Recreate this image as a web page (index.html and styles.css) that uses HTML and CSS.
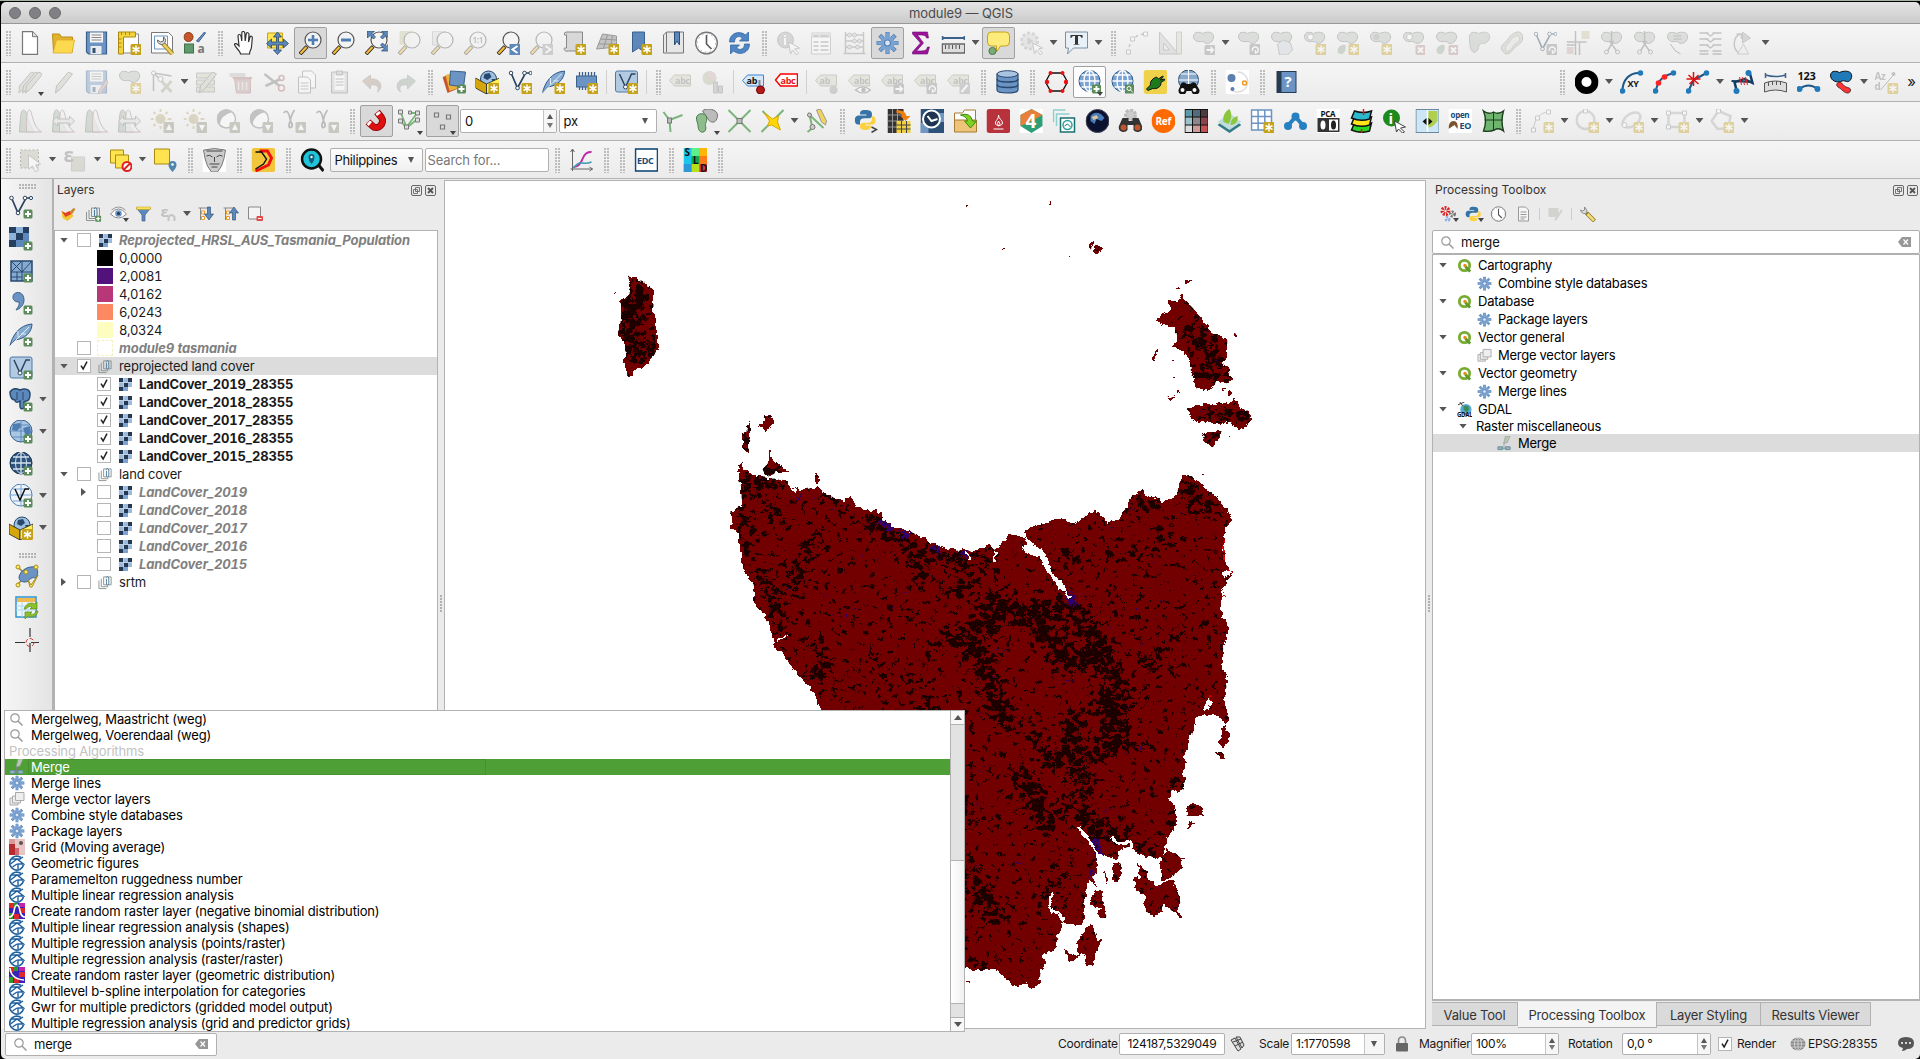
FILE: index.html
```html
<!DOCTYPE html>
<html lang="en">
<head>
<meta charset="utf-8">
<title>module9 — QGIS</title>
<link rel="stylesheet" href="styles.css">
</head>
<body>
<svg class="sprite" aria-hidden="true">
<defs>
<!-- badges -->
<symbol id="bstar" viewBox="0 0 24 24"><rect x="13" y="13" width="11" height="11" rx="1.500" fill="#c4a21a"/><path d="M18.500 14.500v8M15 16.500l7 4M15 20.500l7-4" stroke="#fff" stroke-width="1.500"/></symbol>
<symbol id="bplus" viewBox="0 0 24 24"><rect x="14.500" y="14.500" width="9" height="9" rx="1.500" fill="#5a8c5a"/><path d="M19 16v6M16 19h6" stroke="#fff" stroke-width="2"/></symbol>
<symbol id="bx" viewBox="0 0 24 24"><rect x="14" y="14" width="10" height="10" rx="1.500" fill="#b78f8f"/><path d="M16.500 16.500l5 5M21.500 16.500l-5 5" stroke="#fff" stroke-width="2"/></symbol>
<symbol id="barr" viewBox="0 0 24 24"><rect x="13" y="14" width="11" height="10" rx="1.500" fill="#888"/><path d="M15 18h4v-3l4 4-4 4v-3h-4z" fill="#fff"/></symbol>
<symbol id="brot" viewBox="0 0 24 24"><rect x="13" y="13" width="11" height="11" rx="1.500" fill="#888"/><path d="M16 20a3 3 0 1 1 3 2v-3" stroke="#fff" stroke-width="1.500" fill="none"/></symbol>
<symbol id="bup" viewBox="0 0 24 24"><rect x="13" y="13" width="11" height="11" rx="1.500" fill="#8b8b78"/><path d="M18.500 15l3 6h-6z" fill="#fff"/></symbol>
<symbol id="bdn" viewBox="0 0 24 24"><rect x="13" y="13" width="11" height="11" rx="1.500" fill="#8b8b78"/><path d="M18.500 22l3-6h-6z" fill="#fff"/></symbol>
<symbol id="blob" viewBox="0 0 24 24"><path d="M2 5c1-5 6-4 9-2.500 4-2 10-2 11 2s-3 8-6 8-3-2.500-6-2-8 0-8-5.500z" fill="#b9c0b9" stroke="#777" stroke-width="1"/></symbol>
<symbol id="loupe" viewBox="0 0 24 24"><path d="M8.500 15.500L1.500 23" stroke="#222" stroke-width="4"/><path d="M8 16L2 22.500" stroke="#f0b93a" stroke-width="2.400"/><circle cx="14.500" cy="9" r="8" fill="#f4f4f4" fill-opacity=".9" stroke="#555" stroke-width="1.200"/></symbol>
<symbol id="vline" viewBox="0 0 24 24"><path d="M3 4l6 14L17 3h5" fill="none" stroke="#2b4560" stroke-width="1.700"/><g fill="#fff" stroke="#2b4560"><circle cx="2.500" cy="3" r="1.800"/><circle cx="9" cy="18" r="1.800"/><circle cx="16" cy="3" r="1.800"/><circle cx="22" cy="3" r="1.600"/></g></symbol>
<symbol id="globe" viewBox="0 0 24 24"><circle cx="12" cy="11" r="10.500" fill="#7ba3d2" stroke="#2f5a88"/><path d="M12 1v20M2 11h20M4 5h16M4 17h16" stroke="#fff" stroke-width="1.300"/><ellipse cx="12" cy="11" rx="5.500" ry="10.500" fill="none" stroke="#fff" stroke-width="1.300"/></symbol>
<symbol id="pencil" viewBox="0 0 24 24"><path d="M17 2l4 2L9 19l-5 4 1-7z" fill="#c9c8bc" stroke="#777"/></symbol>
<symbol id="tag" viewBox="0 0 24 24"><path d="M6 5h16v11H6L1 10.500z" fill="#d2d2c0" stroke="#8f8f80"/></symbol>
<symbol id="abc" viewBox="0 0 24 24"><use href="#tag"/><text x="6.500" y="14" class="t9">abc</text></symbol>
<!-- project -->
<symbol id="new" viewBox="0 0 24 24"><path d="M4 .7h10l5 5v17.600H4z" fill="#fff" stroke="#777" stroke-width="1.200"/><path d="M14 .7v5h5" fill="#ddd" stroke="#777"/></symbol>
<symbol id="open" viewBox="0 0 24 24"><path d="M1 3h7l2 3h11v15H2z" fill="#e2b32e" stroke="#bb8d15"/><path d="M5 9h18l-2.500 13H1.500z" fill="#fcd94f" stroke="#dca92b" stroke-width=".8"/></symbol>
<symbol id="save" viewBox="0 0 24 24"><path d="M2 1h20v22H4l-2-2z" fill="#6b93c4" stroke="#3a618c" stroke-width="1.200"/><path d="M5.500 1.500h13v10h-13z" fill="#f6f6f6"/><path d="M7 4h10M7 6.500h10M7 9h10" stroke="#888"/><path d="M6 15h11v8H6z" fill="#e8ecef"/><path d="M8 17h3v5H8z" fill="#34516f"/></symbol>
<symbol id="layout" viewBox="0 0 24 24"><path d="M4 3h17v19H4z" fill="#fff" stroke="#888"/><path d="M1 1h17v5H6v17H1z" fill="#f5d33d" stroke="#a88912"/><path d="M4 1v3M8 1v3M12 1v3M1 8h3M1 12h3M1 16h3" stroke="#a88912"/><use href="#bstar"/></symbol>
<symbol id="laymgr" viewBox="0 0 24 24"><path d="M1 1.500h17l4 4V22H1z" fill="#fff" stroke="#777"/><path d="M4 5h13v13H4z" fill="none" stroke="#6b93c4"/><path d="M12 12l10 11" stroke="#a08a30" stroke-width="4.500"/><path d="M12 12l10 11" stroke="#f0d060" stroke-width="2.500"/><path d="M7 9a4 4 0 0 0 6 4 4 4 0 0 0 0-7v4l-3 1z" fill="#ddd" stroke="#666"/></symbol>
<symbol id="style" viewBox="0 0 24 24"><circle cx="5" cy="6" r="4.500" fill="#c6562c" stroke="#8b3818"/><path d="M13 10l8-9 1 1-7 9z" fill="#6b93c4" stroke="#3a618c"/><rect x="1" y="13" width="9" height="9" fill="#5e9a6c" stroke="#3c714a"/><text x="14" y="22" class="t12">a</text></symbol>
<symbol id="hand" viewBox="0 0 24 24"><path d="M8 23c0-3-6-7-6-10 1.500-1.500 3.500 1 4.500 2L5.500 5c0-2 2.500-2 3 0l.8 5V2c0-2 2.700-2 3 0l.4 8 1-7c.4-2 2.800-1.500 2.800.5L16 11l1.500-5c.8-1.500 2.500-.7 2.300 1L19 16c-.3 3-2 4-2 7z" fill="#fff" stroke="#333" stroke-width="1.200"/></symbol>
<symbol id="pan" viewBox="0 0 24 24"><path d="M2 2h15v15H2z" fill="#ffe44f" stroke="#c4a21a"/><path d="M12 1l4 5h-3v5h5V8l5 4.500-5 4.500v-3h-5v5h3l-4 4.500L8 19h3v-5H6v3l-5-4.500L6 8v3h5V6H8z" fill="#5c88bb" stroke="#28486d" stroke-width=".8"/></symbol>
<symbol id="zin" viewBox="0 0 24 24"><use href="#loupe"/><path d="M14.500 4v10M9.500 9h10" stroke="#4e7db1" stroke-width="2.600"/></symbol>
<symbol id="zout" viewBox="0 0 24 24"><use href="#loupe"/><path d="M9.500 9h10" stroke="#4e7db1" stroke-width="3"/></symbol>
<symbol id="zfull" viewBox="0 0 24 24"><use href="#loupe"/><path d="M3 0h7L7.500 2.500 11 6 9 8 5.500 4.500 3 7zM24 0h-7l2.500 2.500L16 6l2 2 3.500-3.500L24 7zM24 20h-7l2.500-2.500L16 14l2-2 3.500 3.500L24 13z" fill="#5c88bb" stroke="#28486d" stroke-width=".7"/></symbol>
<symbol id="zsel" viewBox="0 0 24 24"><path d="M2 0h12v14H2z" fill="#c8c8a0"/><use href="#loupe"/></symbol>
<symbol id="zlay" viewBox="0 0 24 24"><path d="M2 0h12v14H2z" fill="#ddd" stroke="#aaa"/><use href="#loupe"/></symbol>
<symbol id="znat" viewBox="0 0 24 24"><use href="#loupe"/><text x="9" y="12" class="t8">1:1</text></symbol>
<symbol id="zlast" viewBox="0 0 24 24"><use href="#loupe"/><rect x="13" y="13" width="11" height="11" fill="#5c88bb"/><path d="M21 15l-5 3.500 5 3.500" stroke="#fff" stroke-width="2" fill="none"/></symbol>
<symbol id="znext" viewBox="0 0 24 24"><use href="#loupe"/><rect x="13" y="13" width="11" height="11" fill="#999"/><path d="M16 15l5 3.500-5 3.500" stroke="#fff" stroke-width="2" fill="none"/></symbol>
<symbol id="nmap" viewBox="0 0 24 24"><path d="M4 1h16v19H6c-4 1-5-2-4-3h2z" fill="#d8d8d8" stroke="#888"/><path d="M4 1q-3 0-2 3h2" fill="#eee" stroke="#888"/><use href="#bstar"/></symbol>
<symbol id="n3d" viewBox="0 0 24 24"><path d="M7 3l14 2v11L1 18z" fill="#c4c4c4" stroke="#999"/><path d="M5 8l16 1M3 13l18 0M12 4L8 17M17 4l-2 13" stroke="#999"/><use href="#bstar"/></symbol>
<symbol id="nbook" viewBox="0 0 24 24"><path d="M4 1h12v20l-6-4-6 4z" fill="#5c88bb" stroke="#3a618c"/><use href="#bstar"/></symbol>
<symbol id="book" viewBox="0 0 24 24"><path d="M5 1h17v21H2V4z" fill="#e6e6e6" stroke="#777"/><path d="M5 1v20" stroke="#777"/><path d="M13 1h5v13l-2.500-4-2.500 4z" fill="#5c88bb" stroke="#2c4f78"/></symbol>
<symbol id="clock" viewBox="0 0 24 24"><circle cx="12" cy="12" r="10.800" fill="#fff" stroke="#777" stroke-width="1.400"/><circle cx="12" cy="12" r="9" fill="none" stroke="#9db6d0" stroke-dasharray="1.500 3.200"/><path d="M12 4v9l5 5" fill="none" stroke="#555" stroke-width="1.600"/></symbol>
<symbol id="refresh" viewBox="0 0 24 24"><path d="M2 11C2 2 12-1 18 4l3-3v9h-9l3-3c-4-3-8-1-8 4zM22 13c0 9-10 12-16 7l-3 3v-9h9l-3 3c4 3 8 1 8-4z" fill="#4f85c3" stroke="#3468a3" stroke-width=".8"/></symbol>
<!-- attributes -->
<symbol id="ident" viewBox="0 0 24 24"><circle cx="9" cy="9" r="8" fill="#aaa" stroke="#888"/><text x="6.500" y="14" class="t13 w">i</text><path d="M12 11l11 6-5 1 4 4-2 2-4-5-2 4z" fill="#fff" stroke="#888"/></symbol>
<symbol id="table" viewBox="0 0 24 24"><path d="M2 2h19v21H2z" fill="#fff" stroke="#999"/><path d="M2 2h19v5H2z" fill="#ccc"/><path d="M4 11h5M11 11h8M4 15h5M11 15h8M4 19h5M11 19h8M4 5h5M11 5h8" stroke="#888" stroke-width="1.500"/></symbol>
<symbol id="abacus" viewBox="0 0 24 24"><path d="M3 1v22M21 1v22M1 22.500h22M3 4h18M3 10h18M3 16h18" stroke="#888" stroke-width="1.500"/><g fill="#ccc" stroke="#888"><circle cx="7" cy="4" r="2"/><circle cx="12" cy="4" r="2"/><circle cx="12" cy="10" r="2"/><circle cx="17" cy="10" r="2"/><circle cx="7" cy="16" r="2"/><circle cx="15" cy="16" r="2"/></g></symbol>
<symbol id="gear" viewBox="0 0 24 24"><path d="M12 1v22M1 12h22M4.200 4.200l15.600 15.600M19.800 4.200L4.200 19.800" stroke="#5580b4" stroke-width="4.200"/><path d="M12 1.600v20.800M1.600 12h20.800M4.700 4.700l14.600 14.600M19.300 4.700L4.700 19.300" stroke="#7ba3d2" stroke-width="2.800"/><circle cx="12" cy="12" r="7" fill="#7ba3d2"/><circle cx="12" cy="12" r="3" fill="#dce6f2" stroke="#5580b4" stroke-width="1.200"/></symbol>
<symbol id="sum" viewBox="0 0 24 24"><path d="M4 1h15l1 6h-2c-1-3-2-3-9-3l6 8-7 8c8 0 10 0 11-4h2l-2 7H4v-2l8-9-8-9z" fill="#9c149c" stroke="#6b0b6b" stroke-width=".6"/></symbol>
<symbol id="meas" viewBox="0 0 24 24"><path d="M1 7h22M1 5v4M23 5v4" stroke="#3a618c" stroke-width="1.800"/><rect x=".7" y="13" width="22.600" height="9" fill="#ddd" stroke="#555" stroke-width="1.300"/><path d="M4 14v4M7.500 14v4M11 14v4M14.500 14v4M18 14v4" stroke="#555"/></symbol>
<symbol id="tip" viewBox="0 0 24 24"><path d="M5 1h14q4 0 4 4v6q0 4-4 4h-5l-4 6v-6H5q-4 0-4-4V5q0-4 4-4z" fill="#fdec7b" stroke="#c4a21a"/><circle cx="6" cy="20" r="3.600" fill="#7aa97a" stroke="#4d7a4d"/></symbol>
<symbol id="act" viewBox="0 0 24 24"><g opacity=".8"><circle cx="10" cy="10" r="8" fill="#ccc" stroke="#999" stroke-width="3" stroke-dasharray="3 2"/><path d="M8 6l6 4-6 4z" fill="#888"/></g><path d="M13 12l10 5-4 1 4 4-2 2-4-5-2 4z" fill="#fff" stroke="#888"/></symbol>
<symbol id="tann" viewBox="0 0 24 24"><path d="M1 1h22v16H9l-6 6 1-6H1z" fill="#e9f1f8" stroke="#7a8ea5"/><path d="M6 4h12v3h-1c0-1.500-1-2-3.500-2v8l2 .8H8.500l2-.8V5C8 5 7 5.500 7 7H6z" fill="#333"/></symbol>
<!-- digitizing -->
<symbol id="cad" viewBox="0 0 24 24"><path d="M3 22C3 12 8 3 20 3" fill="none" stroke="#888" stroke-dasharray="3 3" stroke-width="1.500"/><path d="M1 19h4v4H1zM5 6h4v4H5zM18 1h4v4h-4z" fill="#fff" stroke="#888"/></symbol>
<symbol id="tri" viewBox="0 0 24 24"><path d="M1 1l19 22H1zM5 12l6 7H5z" fill="#ccc" fill-rule="evenodd" stroke="#888"/><path d="M18 1h5v22h-5z" fill="#d8d8c8" stroke="#999"/></symbol>
<symbol id="bmove" viewBox="0 0 24 24"><use href="#blob"/><use href="#barr"/></symbol>
<symbol id="brotate" viewBox="0 0 24 24"><use href="#blob"/><use href="#brot"/></symbol>
<symbol id="bsimp" viewBox="0 0 24 24"><use href="#blob"/><path d="M8 13l6-4 7 3 2 7-5 5H10z" fill="#cfd5de" stroke="#888"/></symbol>
<symbol id="bring" viewBox="0 0 24 24"><use href="#blob"/><circle cx="8" cy="6" r="3" fill="#fff" stroke="#888"/><use href="#bstar"/></symbol>
<symbol id="bpart" viewBox="0 0 24 24"><use href="#blob"/><path d="M2 20c0-4 4-7 8-6 1 4-1 9-4 9s-4-1-4-3z" fill="#9aa89a"/><use href="#bstar"/></symbol>
<symbol id="bfill" viewBox="0 0 24 24"><use href="#blob"/><circle cx="8" cy="6" r="3" fill="#999"/><use href="#bstar"/></symbol>
<symbol id="bdring" viewBox="0 0 24 24"><use href="#blob"/><circle cx="8" cy="6" r="3" fill="#fff" stroke="#888"/><use href="#bx"/></symbol>
<symbol id="bdpart" viewBox="0 0 24 24"><use href="#blob"/><path d="M2 20c0-4 4-7 8-6 1 4-1 9-4 9s-4-1-4-3z" fill="#9aa89a"/><use href="#bx"/></symbol>
<symbol id="breshape" viewBox="0 0 24 24"><path d="M2 5c1-5 6-4 9-2.500 4-2 10-2 11 2s-3 8-6 8-4 0-5 4-4 6-6 4-3-6-3-14z" fill="#b9beb9" stroke="#888"/></symbol>
<symbol id="boffset" viewBox="0 0 24 24"><path d="M14 2c5-3 9 1 8 6s-4 5-7 8-7 9-11 6-4-7 0-10 5-8 10-10z" fill="#c4c8b8" stroke="#888"/><path d="M15 5c3-1 5 1 4 4s-4 3-6 6-5 7-7 5-1-5 1-7 4-7 8-8z" fill="#e0e0dc" stroke="#999"/></symbol>
<symbol id="vrot" viewBox="0 0 24 24"><use href="#vline"/><use href="#brot"/></symbol>
<symbol id="vtrim" viewBox="0 0 24 24"><path d="M9 0v24M13 12v12M0 11h20M0 14h8" stroke="#777" stroke-width="1.500"/><rect x="15" y="0" width="8" height="8" fill="#c8c0a0"/><rect x="0" y="16" width="7" height="7" fill="#c8a8a8"/></symbol>
<symbol id="bcut" viewBox="0 0 24 24"><use href="#blob"/><path d="M12 0v12M10 10l7 10M14 10L8 20" stroke="#777" stroke-width="1.500"/><circle cx="7" cy="21" r="2" fill="none" stroke="#777"/><circle cx="18" cy="21" r="2" fill="none" stroke="#777"/></symbol>
<symbol id="bmerge" viewBox="0 0 24 24"><use href="#blob"/><path d="M8 5h8M8 8h8M5 13q4 8 10 10" stroke="#666" fill="none"/></symbol>
<symbol id="hatch" viewBox="0 0 24 24"><path d="M1 2h9M14 2h9M1 8h9M14 8h9M1 14h9M14 14h9M1 20h9M14 20h9M8 2l4 3 4-3M8 8l4 3 4-3M8 14l4 3 4-3M1 23h9M14 23h9" fill="none" stroke="#777" stroke-width="1.300"/></symbol>
<symbol id="rotsym" viewBox="0 0 24 24"><path d="M7 22C1 17 1 6 9 3M5 3h5v5" stroke="#888" fill="none" stroke-width="1.500"/><path d="M11 1l8 6-8 5z" fill="#aaa" stroke="#888"/><path d="M6 23h11l-5-10z" fill="#eee" stroke="#999"/></symbol>
<symbol id="pencils" viewBox="0 0 24 24"><use href="#pencil" x="-4"/><use href="#pencil"/><use href="#pencil" x="3"/></symbol>
<symbol id="savee" viewBox="0 0 24 24"><use href="#save"/><path d="M22 10l2 2-8 11-2 1v-3z" fill="#caa" stroke="#977"/></symbol>
<symbol id="addpoly" viewBox="0 0 24 24"><use href="#blob"/><use href="#bstar"/></symbol>
<symbol id="vtool" viewBox="0 0 24 24"><path d="M3 3v18M3 3l18 3M3 3l9 9" stroke="#777" stroke-width="1.500"/><path d="M11 22L21 11M11 11l10 11" stroke="#aaa890" stroke-width="3"/><circle cx="3" cy="3" r="2" fill="#fff" stroke="#777"/><circle cx="10" cy="9" r="2.500" fill="#fff" stroke="#777"/></symbol>
<symbol id="modattr" viewBox="0 0 24 24"><path d="M1 3h18v5H1zM1 10h18v5H1zM1 17h18v5H1z" fill="#ceceb6" stroke="#888"/><use href="#pencil"/></symbol>
<symbol id="trash" viewBox="0 0 24 24"><path d="M1 3h16v4H1z" fill="#bbb"/><path d="M6 9h16v14H8z" fill="#b99" stroke="#a77"/><path d="M4 8h20" stroke="#a77" stroke-width="2"/><path d="M10 12v8M14 12v8M18 12v8" stroke="#e6dcdc" stroke-width="1.500"/></symbol>
<symbol id="cut" viewBox="0 0 24 24"><path d="M3 4l15 12M4 16l15-7" stroke="#777" stroke-width="2.500"/><circle cx="20" cy="18" r="3" fill="none" stroke="#a66" stroke-width="1.500"/><circle cx="20" cy="8" r="2.500" fill="none" stroke="#a66" stroke-width="1.500"/></symbol>
<symbol id="copy" viewBox="0 0 24 24"><path d="M8 1h9l4 4v13H8z" fill="#fff" stroke="#777"/><path d="M4 7h9l3 3v13H4z" fill="#fff" stroke="#777"/><path d="M6 13h8M6 16h8M6 19h8" stroke="#888"/></symbol>
<symbol id="paste" viewBox="0 0 24 24"><path d="M4 2h16v21H4z" fill="#ccc" stroke="#777"/><path d="M7 5h10v15H7z" fill="#fff"/><path d="M9 1h6v4H9zM8 9h8M8 12h8M8 15h8" fill="#bbb" stroke="#777"/></symbol>
<symbol id="undo" viewBox="0 0 24 24"><path d="M2 11l8-6v4c11-1 13 9 7 13 2-5 0-8-7-7v4z" fill="#a8968a" stroke="#998a80"/></symbol>
<symbol id="redo" viewBox="0 0 24 24"><path d="M22 11l-8-6v4C3 8 1 18 7 22c-2-5 0-8 7-7v4z" fill="#98a599" stroke="#8a958b"/></symbol>
<!-- data sources -->
<symbol id="dsm" viewBox="0 0 24 24"><path d="M0 7l12-4 5 15-12 5z" fill="#c6562c"/><path d="M3 5l12-3 4 15-12 4z" fill="#e9b23c"/><path d="M8 1l15 1-2 15-14-2z" fill="#6b93c4" stroke="#3a618c"/><use href="#bplus"/></symbol>
<symbol id="gpkg" viewBox="0 0 24 24"><circle cx="13" cy="9" r="8" fill="#9cc0e0" stroke="#28486d"/><path d="M9 4l5-1 2 4-4 3-4-2zM16 9l4 0-2 5z" fill="#28486d"/><path d="M0 8l11 6v10L0 18z" fill="#d4a60a" stroke="#222" stroke-width=".8"/><path d="M24 8l-13 6v10l13-6z" fill="#ffee58" stroke="#222" stroke-width=".8"/></symbol>
<symbol id="gpkgn" viewBox="0 0 24 24"><use href="#gpkg"/><use href="#bstar"/></symbol>
<symbol id="nvec" viewBox="0 0 24 24"><use href="#vline"/><use href="#bstar"/></symbol>
<symbol id="avec" viewBox="0 0 24 24"><use href="#vline"/><use href="#bplus"/></symbol>
<symbol id="quill" viewBox="0 0 24 24"><path d="M1 23C3 13 10 2 23 1c0 8-7 15-17 16z" fill="#86abd2" stroke="#2f5a88"/><path d="M1 23L20 4M9 14v-6M12 11h5" stroke="#f0f5fa" stroke-width=".9"/></symbol>
<symbol id="nquill" viewBox="0 0 24 24"><use href="#quill"/><use href="#bstar"/></symbol>
<symbol id="aquill" viewBox="0 0 24 24"><use href="#quill"/><use href="#bplus"/></symbol>
<symbol id="chip" viewBox="0 0 24 24"><path d="M5 2v18M8 2v18M11 2v18M14 2v18M17 2v18M20 2v18" stroke="#3a618c" stroke-width="1.300"/><rect x="2" y="6" width="20" height="11" fill="#6b93c4" stroke="#3a618c"/><use href="#bstar"/></symbol>
<symbol id="vbox" viewBox="0 0 24 24"><rect x="1" y="1" width="22" height="21" rx="2" fill="#b3cbe2" stroke="#4e78a5"/><path d="M5 4l6 13 6-13h4" fill="none" stroke="#2b4560" stroke-width="1.500"/><circle cx="11" cy="17" r="2" fill="#fff" stroke="#2b4560"/></symbol>
<symbol id="nvbox" viewBox="0 0 24 24"><use href="#vbox"/><use href="#bstar"/></symbol>
<symbol id="avbox" viewBox="0 0 24 24"><use href="#vbox"/><use href="#bplus"/></symbol>
<symbol id="rast" viewBox="0 0 24 24"><path d="M0 0h20v20H0z" fill="#5c88bb"/><path d="M0 0h7v6H0zM14 0h6v6h-6zM7 6h7v7H7zM0 13h7v7H0z" fill="#243f60"/><path d="M7 0h7v6H7zM0 6h7v7H0z" fill="#8fb2d8"/><use href="#bplus"/></symbol>
<symbol id="mesh" viewBox="0 0 24 24"><path d="M2 2h21v20H2z" fill="#86abd2" stroke="#28486d" stroke-width="1.500"/><path d="M2 13h21M13 2v20M2 2l11 11M13 2L2 13M13 13L23 2M2 18h11M8 13v9" stroke="#28486d"/><use href="#bplus"/></symbol>
<symbol id="comma" viewBox="0 0 24 24"><path d="M4 6c0-6 11-7 11 3 0 5-4 9-8 10 2-3 4-5 3-8-3 0-6-1-6-5z" fill="#6b93c4" stroke="#3a618c"/><use href="#bplus"/></symbol>
<symbol id="pg" viewBox="0 0 24 24"><path d="M1 4c3-5 8-3 10-2 5-2 10-1 10 4s-2 7-4 7l-2 1v6q-4 2-4-2v-5c-4 3-5 0-5-1-4 0-5-5-5-8z" fill="#5c88bb" stroke="#28486d" stroke-width="1.500"/><path d="M8 4v8M14 4v8" stroke="#28486d"/><use href="#bplus"/></symbol>
<symbol id="wms" viewBox="0 0 24 24"><circle cx="12" cy="11" r="11" fill="#a9c6e3" stroke="#3a618c"/><path d="M4 4l7-1 1 4-4 4-5-1zM14 8l7-2 1 7-5 4z" fill="#4e7db1"/><path d="M1 11h22M4 5h16M4 17h16M12 0v22" stroke="#4e7db1" stroke-width=".8"/><use href="#bplus"/></symbol>
<symbol id="wcs" viewBox="0 0 24 24"><circle cx="12" cy="11" r="11" fill="#2d527b" stroke="#1d3653"/><path d="M2 11h20M4 5h16M4 17h16M12 0v22" stroke="#d5e2ef" stroke-width="1.300"/><ellipse cx="12" cy="11" rx="5.500" ry="10.500" fill="none" stroke="#d5e2ef"/><use href="#bplus"/></symbol>
<symbol id="wfs" viewBox="0 0 24 24"><circle cx="12" cy="11" r="11" fill="#eef4fa" stroke="#4e7db1"/><path d="M1 11h22M4 5h16M4 17h16M12 0v22" stroke="#7ba3d2"/><path d="M6 5l5 11 5-11h4" stroke="#111" fill="none" stroke-width="1.500"/><use href="#bplus"/></symbol>
<symbol id="topo" viewBox="0 0 24 24"><path d="M3 3l5 5 12-5M3 20l6-6" stroke="#a88b20" stroke-width="1.500" fill="none"/><path d="M4 13c2-8 10-11 16-10 4 2 3 10 0 11-5-2-5 4-10 4-4 0-6-2-6-5z" fill="#6b93c4" stroke="#3a618c"/><path d="M13 16l3 5 7-10-6 12-2 0z" fill="#ffee58" stroke="#a88b20"/><g fill="#ffee58" stroke="#a88b20"><circle cx="3" cy="3" r="2"/><circle cx="3" cy="21" r="2"/><circle cx="11" cy="8" r="2"/><circle cx="21" cy="3" r="2"/></g></symbol>
<symbol id="tblref" viewBox="0 0 24 24"><path d="M1 1h20v20H1z" fill="#eef7fd" stroke="#2f93cd" stroke-width="1.500"/><path d="M2 2h18v4H2z" fill="#f2b950"/><path d="M1 10h20M1 14h20M7 6v15M13 6v15" stroke="#b0d8ef"/><path d="M9 13c2-6 8-7 11-5l2-2v7h-7l2-2c-3-1-5 0-6 2zM23 15c-1 6-7 7-10 5l-3 3v-7h7l-2 2c3 1 5 0 6-3z" fill="#8cc02c" stroke="#5d8a12" stroke-width=".7"/></symbol>
<symbol id="cross" viewBox="0 0 24 24"><path d="M15 0v9M15 15v9M0 14.500h10M16 14.500h8" stroke="#333" stroke-width="1.200"/><circle cx="15" cy="14.500" r="4" fill="none" stroke="#c33" stroke-dasharray="4 2"/></symbol>
<!-- labels -->
<symbol id="diag" viewBox="0 0 24 24"><circle cx="8" cy="8" r="7" fill="#b5b59f"/><path d="M8 8V1a7 7 0 0 1 6 10z" fill="#caa"/><path d="M12 12h4v11h-4zM17 16h4v7h-4z" fill="#aaa" stroke="#888"/></symbol>
<symbol id="lpin" viewBox="0 0 24 24"><path d="M6 5h16v11H6L1 10.500z" fill="#d6e8fa" stroke="#3b84d4"/><text x="5" y="14" class="t9 k">ab</text><path d="M18 10v9" stroke="#888" stroke-width="2"/><circle cx="19" cy="20" r="4" fill="#b31b1b" stroke="#700"/></symbol>
<symbol id="lred" viewBox="0 0 24 24"><path d="M6 4h17v12H6L1 10z" fill="#fff" stroke="#f00" stroke-width="1.500"/><text x="6" y="14" class="t9 r">abc</text></symbol>
<symbol id="l1" viewBox="0 0 24 24"><use href="#tag"/><text x="5" y="14" class="t9">ab</text><circle cx="19" cy="20" r="4" fill="#999"/></symbol>
<symbol id="l2" viewBox="0 0 24 24"><use href="#abc"/><path d="M8 20q7-6 15 0-7 6-15 0z" fill="#fff" stroke="#666" stroke-width="1.200"/><circle cx="16" cy="20" r="2.300" fill="#777"/></symbol>
<symbol id="l3" viewBox="0 0 24 24"><use href="#abc"/><use href="#barr"/></symbol>
<symbol id="l4" viewBox="0 0 24 24"><use href="#abc"/><use href="#brot"/></symbol>
<symbol id="l5" viewBox="0 0 24 24"><use href="#abc"/><rect x="13" y="13" width="11" height="11" fill="#999"/><path d="M15 22l6-7" stroke="#fff" stroke-width="2"/></symbol>
<!-- web and plugins -->
<symbol id="db" viewBox="0 0 24 24"><path d="M1.500 4v16c0 4 21 4 21 0V4z" fill="#6b93c4" stroke="#28486d" stroke-width="1.200"/><ellipse cx="12" cy="4" rx="10.500" ry="3.300" fill="#a9c4e0" stroke="#28486d"/><path d="M1.500 9c0 4 21 4 21 0M1.500 14.500c0 4 21 4 21 0" fill="none" stroke="#28486d" stroke-width="1.500"/></symbol>
<symbol id="hexa" viewBox="0 0 24 24"><path d="M6 3h12l5 9-5 9H6l-5-9z" fill="none" stroke="#111" stroke-width="1.300"/><g fill="#e11"><circle cx="6" cy="3" r="2"/><circle cx="18" cy="3" r="2"/><circle cx="2.500" cy="12" r="2.200"/><circle cx="21.500" cy="12" r="2.200"/><circle cx="6" cy="21" r="2"/><circle cx="18" cy="21" r="2"/></g></symbol>
<symbol id="gadd" viewBox="0 0 24 24"><use href="#globe"/><use href="#bplus"/></symbol>
<symbol id="gsrch" viewBox="0 0 24 24"><use href="#globe"/><rect x="14.500" y="14.500" width="9" height="9" fill="#5a8c5a"/><circle cx="18.500" cy="18.500" r="2" fill="none" stroke="#fff"/><path d="M20 20l2.500 2.500" stroke="#fff"/></symbol>
<symbol id="plug" viewBox="0 0 24 24"><rect width="24" height="24" rx="3" fill="#f0d24a"/><path d="M3 19l4-4c-1-4 3-7 6-8l2 2 4-3 .8.800-3 3.200 4-1 .5 1-4 2.500c1 4-4 7-8 6l-5 2z" fill="#1c7a1c" stroke="#111"/></symbol>
<symbol id="gbin" viewBox="0 0 24 24"><circle cx="12" cy="10" r="10" fill="#87a9cd" stroke="#28486d"/><path d="M2 10h20M4 4h16M12 0v14" stroke="#fff"/><path d="M5 13q3-2 5 1h4q2-3 5-1l4 7a4 4 0 0 1-8 1h-5a4 4 0 0 1-8-1z" fill="#111"/><circle cx="6" cy="20" r="2" fill="#fff"/><circle cx="18" cy="20" r="2" fill="#fff"/></symbol>
<symbol id="orbit" viewBox="0 0 24 24"><rect width="24" height="24" fill="#fff"/><path d="M12 2a10 10 0 1 1-7 17" fill="none" stroke="#ddd" stroke-width="1.500"/><circle cx="6" cy="8" r="4" fill="#5b7fae"/><circle cx="19" cy="13" r="2" fill="none" stroke="#f39a1e" stroke-width="1.500"/><circle cx="7" cy="19" r="2" fill="#5b7fae"/></symbol>
<symbol id="help" viewBox="0 0 24 24"><rect x="2" y="1" width="20" height="22" fill="#263b52"/><rect x="7" y="2" width="14" height="20" fill="#6b93c4"/><text x="10" y="17" class="t15 w">?</text></symbol>
<symbol id="ring" viewBox="0 0 24 24"><circle cx="12" cy="12" r="8.500" fill="#fff" stroke="#000" stroke-width="7"/></symbol>
<symbol id="xy" viewBox="0 0 24 24"><path d="M3 21C3 10 10 2 21 3" fill="none" stroke="#1c5788" stroke-width="2"/><circle cx="3" cy="21" r="2.800" fill="#2079b8"/><circle cx="21" cy="3" r="2.800" fill="#2079b8"/><text x="8" y="17" class="t9 k">XY</text></symbol>
<symbol id="edp" viewBox="0 0 24 24"><path d="M3 21L6 12 12 6 21 3" fill="none" stroke="#1c5788" stroke-width="2"/><circle cx="3" cy="21" r="2.800" fill="#2079b8"/><circle cx="21" cy="3" r="2.800" fill="#2079b8"/><circle cx="6" cy="13" r="2.800" fill="#f22"/><circle cx="12" cy="7" r="2.800" fill="#f22"/></symbol>
<symbol id="edx" viewBox="0 0 24 24"><path d="M3 21L8 10 21 3" fill="none" stroke="#1c5788" stroke-width="2"/><circle cx="3" cy="21" r="2.800" fill="#2079b8"/><circle cx="21" cy="3" r="2.800" fill="#2079b8"/><path d="M8 2v14M1 9h14M3 5l10 9M13 5L4 14" stroke="#d11" stroke-width="1.500"/></symbol>
<symbol id="edz" viewBox="0 0 24 24"><path d="M6 20L4 12l10-3 8 4-3-11" fill="none" stroke="#143d60" stroke-width="2.500"/><path d="M1 11l20 1" stroke="#143d60" stroke-width="2"/><circle cx="6" cy="21" r="3" fill="#2079b8"/><circle cx="18" cy="3" r="3" fill="#2079b8"/><path d="M9 7l2 8M12 7l2 8M15 7l2 8" stroke="#e22"/></symbol>
<symbol id="medge" viewBox="0 0 24 24"><path d="M2 5q10 3 20 0M2 3v5M22 3v5" stroke="#3a618c" fill="none" stroke-width="1.500"/><path d="M1 13q11-4 22 0v9q-11-4-22 0z" fill="#ddd" stroke="#555"/><path d="M5 12v4M9 11v4M13 11v4M17 11v4" stroke="#555"/></symbol>
<symbol id="n123" viewBox="0 0 24 24"><text x="1" y="10" class="t11 k">123</text><path d="M3 19q9-7 18 0" stroke="#1c5788" fill="none" stroke-width="2"/><circle cx="3" cy="19" r="3" fill="#2079b8"/><circle cx="21" cy="19" r="3" fill="#2079b8"/></symbol>
<symbol id="two" viewBox="0 0 24 24"><path d="M1 5c1-5 6-4 9-2.500 4-2 11-2 12 2s-2 8-5 7-3-1-6 0-10 0-10-6.500z" fill="#2079b8" stroke="#111"/><path d="M8 13c3-2 5 1 7 3s6 1 6 4-3 4-6 2-3-3-5-4-4-3-2-5z" fill="#f33" stroke="#111" stroke-width=".7"/></symbol>
<symbol id="az" viewBox="0 0 24 24"><text x="0" y="10" class="t10">Az</text><text x="0" y="20" class="t10">d</text><path d="M6 20L19 5" stroke="#666"/><circle cx="19" cy="4" r="2" fill="#777"/><use href="#bstar"/></symbol>
<!-- raster and snapping -->
<symbol id="h1" viewBox="0 0 24 24"><path d="M1 23C2 8 2 1 5 1s3 6 5 10 4 10 6 12z" fill="#a5b5a5" stroke="#777"/><path d="M8 23c0-14 0-22 3-22s2 16 12 22z" fill="#eee" fill-opacity=".7" stroke="#977"/></symbol>
<symbol id="h2" viewBox="0 0 24 24"><use href="#h1"/><path d="M1 12l5-5v3h12V7l5 5-5 5v-3H6v3z" fill="#ddd" stroke="#777"/></symbol>
<symbol id="sun" viewBox="0 0 24 24"><circle cx="10" cy="10" r="5" fill="#b5a978"/><path d="M10 0v3M10 17v3M0 10h3M17 10h4M3 3l2 2M15 5l2-2M3 17l2-2" stroke="#b5a978" stroke-width="2"/></symbol>
<symbol id="s1" viewBox="0 0 24 24"><use href="#sun"/><use href="#bup"/></symbol>
<symbol id="s2" viewBox="0 0 24 24"><use href="#sun"/><use href="#bdn"/></symbol>
<symbol id="con" viewBox="0 0 24 24"><circle cx="10" cy="10" r="9" fill="#fff" stroke="#777" stroke-width="1.500"/><path d="M16 3A9 9 0 1 0 3 16q1-10 13-13z" fill="#777"/></symbol>
<symbol id="c1" viewBox="0 0 24 24"><use href="#con"/><use href="#bup"/></symbol>
<symbol id="c2" viewBox="0 0 24 24"><use href="#con"/><use href="#bdn"/></symbol>
<symbol id="gam" viewBox="0 0 24 24"><path d="M1 4c4-5 6 2 7 8 0-5 2-8 4-11M8 12c-3 5-1 8 1 6s0-4-1-6" fill="none" stroke="#666" stroke-width="1.700"/></symbol>
<symbol id="g1" viewBox="0 0 24 24"><use href="#gam"/><use href="#bup"/></symbol>
<symbol id="g2" viewBox="0 0 24 24"><use href="#gam"/><use href="#bdn"/></symbol>
<symbol id="magnet" viewBox="0 0 24 24"><path d="M3.500 13L8 17c5 5 13-3 9-8.500L12.500 3" fill="none" stroke="#8c0000" stroke-width="7"/><path d="M4 13.500L8 17c5 5 13-3 9-8.500L13 4" fill="none" stroke="#dc1010" stroke-width="5.500"/><path d="M3.800 13.300l2 1.700M12.800 3.500l1.700 2" stroke="#fff" stroke-width="5"/></symbol>
<symbol id="snapv" viewBox="0 0 24 24"><path d="M3 3l6 15L19 5M12 4l8 0M3 12l6 7 11-9" fill="none" stroke="#7bb57b" stroke-width="1.800"/><g fill="#ddd" stroke="#777"><path d="M1 1h4v4H1zM11 2h3v3h-3zM18 2h4v4h-4zM7 16h4v4H7zM18 9h4v4h-4zM1 10h4v4H1z"/></g></symbol>
<symbol id="dots" viewBox="0 0 24 24"><path d="M4 4h4v4H4zM16 6h4v4h-4zM10 16h4v4h-4z" fill="#ddd" stroke="#777" stroke-width="1.200"/></symbol>
<symbol id="ty" viewBox="0 0 24 24"><path d="M2 3l6 8 13-5M8 11l1 12" stroke="#7bb57b" stroke-width="2" fill="none"/><rect x="6" y="9" width="4" height="5" fill="#bbb" stroke="#777"/></symbol>
<symbol id="foot" viewBox="0 0 24 24"><path d="M8 2c3-4 16-2 15 5s-5 7-8 5z" fill="#bbb" stroke="#777"/><path d="M2 9c0-5 9-6 10-1s-2 7-1 9 0 7-4 6-3-6-4-9-1-3-1-5z" fill="#8dbd8d" stroke="#4d7a4d"/></symbol>
<symbol id="isx" viewBox="0 0 24 24"><path d="M1 1l22 22M23 1L1 23" stroke="#7bb57b" stroke-width="2"/><rect x="9.500" y="9.500" width="5" height="5" fill="#bbb" stroke="#777"/></symbol>
<symbol id="bolt" viewBox="0 0 24 24"><path d="M23 1L1 23M2 2l9 9" stroke="#7bb57b" stroke-width="2"/><path d="M4 4l8 6 6-3-1 6 3 8-9-5-4 1 2-5z" fill="#ffd60a" stroke="#d9a800"/></symbol>
<symbol id="trace" viewBox="0 0 24 24"><path d="M2 23l5-4L4 6l14 13" stroke="#7bb57b" stroke-width="2" fill="none"/><path d="M11 1l4-1 6 12-1 4-4-3z" fill="#f3d35c" stroke="#999"/><circle cx="4" cy="6" r="2" fill="#ccc" stroke="#777"/><circle cx="7" cy="18" r="2.500" fill="#ccc" stroke="#777"/></symbol>
<symbol id="py" viewBox="0 0 24 24"><path d="M12 1c-6 0-6 2-6 5h7v1H4c-5 0-5 10 0 10h2v-3c0-3 2-4 5-4h5c2 0 3-1 3-3V5c0-3-3-4-7-4z" fill="#3873a5"/><path d="M12 23c5 0 6-2 6-5h-6v-1h8c4 0 4-9 0-9h-1v3c0 3-2 4-4 4h-5c-2 0-4 1-4 3v2c0 2 3 3 6 3z" fill="#fcd140"/></symbol>
<symbol id="pyc" viewBox="0 0 24 24"><use href="#py" width="22" height="22"/><path d="M17 18l5 2.500-5 3" fill="none" stroke="#444" stroke-width="1.500"/></symbol>
<symbol id="rsamp" viewBox="0 0 24 24"><rect width="16" height="24" fill="#333"/><path d="M0 6h16M0 12h16M0 18h16M5 0v24M10 0v24" stroke="#999"/><rect x="9" y="12" width="14" height="12" fill="#f0d040"/><path d="M9 16h14M9 20h14M14 12v12M19 12v12" stroke="#444"/><path d="M9 1q9 0 10 6h4l-5 5-5-5h2q-1-3-6-3z" fill="#f08010"/></symbol>
<symbol id="tm" viewBox="0 0 24 24"><rect width="24" height="24" fill="#2d5278"/><path d="M0 14h8v10H0zM17 4h7v9h-7z" fill="#6e98c2"/><circle cx="11" cy="10" r="8.500" fill="#1d3550" stroke="#fff" stroke-width="2"/><path d="M7 7l4 5 6-2" stroke="#fff" stroke-width="2" fill="none"/></symbol>
<symbol id="fimp" viewBox="0 0 24 24"><path d="M1 4h8l2-3h11v21H1z" fill="#fff" stroke="#a67c35"/><path d="M1 11h22v12H1z" fill="#edc478" stroke="#a67c35"/><path d="M7 6q10-3 12 6h4l-6 7-6-7h3q0-4-7-6z" fill="#7ed321" stroke="#3f8a10"/></symbol>
<symbol id="fire" viewBox="0 0 24 24"><rect width="24" height="24" rx="3" fill="#b8323c"/><path d="M12 6c0 4 4 5 4 8s-7 4-7 0c0-3 3-3 3-8zM12 12q3 4 0 5-2-2 0-5M7 20h10" fill="none" stroke="#fff" stroke-width="1"/></symbol>
<symbol id="four" viewBox="0 0 24 24"><rect width="24" height="24" fill="#fff"/><path d="M12 0l11 6v11l-11 7L1 17V6z" fill="#2e9e76"/><path d="M12 0l11 6-11 6L1 17V6z" fill="#e8803a"/><text x="6" y="19" class="t19 w">4</text></symbol>
<symbol id="stack" viewBox="0 0 24 24"><path d="M1 13V1h12M4 17V5h13" fill="none" stroke="#8ed0d0" stroke-width="1.500"/><path d="M8 9h14v14H8z" fill="#fff" stroke="#1b6f6f" stroke-width="1.500"/><circle cx="15" cy="16" r="4.500" fill="none" stroke="#2aa0a0" stroke-width="1.500"/><path d="M12 17l3-2 3 3" stroke="#1b6f6f" fill="none"/></symbol>
<symbol id="earth" viewBox="0 0 24 24"><circle cx="12" cy="12" r="11.500" fill="#0a1230" stroke="#445"/><path d="M5 7c4-5 10-4 14 2l-3 3-5-2-2 5-4-3z" fill="#4a7bb7"/><path d="M6 8l5-2 2 3-5 2z" fill="#d5c89e"/></symbol>
<symbol id="bino" viewBox="0 0 24 24"><circle cx="12" cy="6" r="5" fill="#ccc" stroke="#bbb" stroke-width="3" stroke-dasharray="3 1.500"/><path d="M4 9h6v3h4V9h6l4 9a5 5 0 0 1-9 3v-5H9v5a5 5 0 0 1-9-3z" fill="#333"/><circle cx="5" cy="18.500" r="3" fill="#c0542a"/><circle cx="19" cy="18.500" r="3" fill="#c0542a"/></symbol>
<symbol id="ref" viewBox="0 0 24 24"><circle cx="12" cy="12" r="12" fill="#ff6a00"/><text x="4" y="16" class="t10 w">Ref</text></symbol>
<symbol id="tiles" viewBox="0 0 24 24"><rect width="24" height="24" fill="#111"/><path d="M1 1h6.500v6.500H1z" fill="#5a9bab"/><path d="M8.500 1h7v6.500h-7z" fill="#546b7c"/><path d="M16.500 1H23v6.500h-6.500z" fill="#4f3b44"/><path d="M1 8.500h6.500v7H1z" fill="#9cc3cc"/><path d="M8.500 8.500h7v7h-7z" fill="#8a868c"/><path d="M16.500 8.500H23v7h-6.500z" fill="#8c444c"/><path d="M1 16.500h6.500V23H1z" fill="#ddd"/><path d="M8.500 16.500h7V23h-7z" fill="#cf9a9a"/><path d="M16.500 16.500H23V23h-6.500z" fill="#c45252"/></symbol>
<symbol id="leaf" viewBox="0 0 24 24"><path d="M12 7l12 9-12 8L0 16z" fill="#317a86"/><path d="M12 4l12 9-12 8L0 13z" fill="#c0dcdc"/><path d="M6 13C5 6 8 2 12 0c3 5 2 11-1 15zM13 16c0-5 3-8 7-9 1 5-2 9-7 9z" fill="#8cc63f"/></symbol>
<symbol id="ngrid" viewBox="0 0 24 24"><path d="M1 1h20v20H1zM1 7.600h20M1 14.300h20M7.600 1v20M14.300 1v20" fill="#fff" stroke="#6b93c4" stroke-width="1.500"/><use href="#bstar"/></symbol>
<symbol id="nodes" viewBox="0 0 24 24"><path d="M4 17l8-9 8 9" stroke="#2680c2" stroke-width="4" fill="none"/><circle cx="4.500" cy="17" r="4" fill="#2680c2"/><circle cx="12" cy="7.500" r="4" fill="#2680c2"/><circle cx="19.500" cy="17" r="4" fill="#2680c2"/></symbol>
<symbol id="pca" viewBox="0 0 24 24"><rect width="24" height="24" fill="#fff"/><text x="4" y="8" class="t8 k">PCA</text><rect x="1" y="9" width="22" height="14" fill="#333"/><path d="M12.500 10.500h9v11h-9z" fill="#fff"/><ellipse cx="6.500" cy="16" rx="2.500" ry="4.500" fill="#fff"/><ellipse cx="17" cy="16" rx="2.500" ry="4.500" fill="#222"/></symbol>
<symbol id="layers3" viewBox="0 0 24 24"><path d="M5 14q9 3 17 0l-2 8q-9 3-18-1z" fill="#28d428" stroke="#111" stroke-width="1.500"/><path d="M5 8q9 3 17 0l-2 8q-9 3-18-1z" fill="#ffe51a" stroke="#111" stroke-width="1.500"/><path d="M5 2q9 3 17 0l-2 8q-9 3-18-1z" fill="#2bb8cc" stroke="#111" stroke-width="1.500"/><path d="M14 0v6M12 20v4" stroke="#e11" stroke-width="1.500"/></symbol>
<symbol id="info" viewBox="0 0 24 24"><circle cx="9" cy="9" r="8.500" fill="#1c8a1c"/><text x="6" y="15" class="t15 w">i</text><path d="M12 12l11 6-5 1 4 4-2 1-4-4-2 3z" fill="#fff" stroke="#444"/></symbol>
<symbol id="swipe" viewBox="0 0 24 24"><rect x=".5" y=".5" width="23" height="23" fill="#cde6f6" stroke="#6b87a0"/><path d="M12 2h10v10q-6 8-10 6z" fill="#b0cf50"/><path d="M12 1v22" stroke="#fff" stroke-width="1.500"/><path d="M7 12.500l4-3.500v7zM17 12.500L13 9v7z" fill="#111"/></symbol>
<symbol id="oeo" viewBox="0 0 24 24"><rect width="24" height="24" fill="#fff"/><text x="2" y="9" class="t8 b">open</text><text x="11" y="20" class="t9 b">EO</text><path d="M0 20q0-8 5-8 5 0 4 8l-3-4z" fill="#7b5430"/></symbol>
<symbol id="gmap" viewBox="0 0 24 24"><path d="M2 2q5 4 10 1 5 3 10-1-3 10 0 20-5-4-9-1-5 2-11 1 4-10 0-20z" fill="#6fb46f" stroke="#1d3d1d" stroke-width="1.400"/><path d="M3 11h18M12 3v19" stroke="#1d3d1d"/></symbol>
<symbol id="sh1" viewBox="0 0 24 24"><path d="M3 22C3 12 8 3 19 3" fill="none" stroke="#888"/><path d="M1 19h4v4H1zM5 7h4v4H5zM16 1h4v4h-4z" fill="#fff" stroke="#888"/><use href="#bstar"/></symbol>
<symbol id="sh2" viewBox="0 0 24 24"><circle cx="10" cy="11" r="9" fill="none" stroke="#aaa" stroke-width="2.500"/><path d="M8 0h4v4H8z" fill="#fff" stroke="#888"/><use href="#bstar"/></symbol>
<symbol id="sh3" viewBox="0 0 24 24"><ellipse cx="11" cy="11" rx="10" ry="6" transform="rotate(-35 11 11)" fill="none" stroke="#aaa" stroke-width="2.500"/><circle cx="4" cy="16" r="2.500" fill="#fff" stroke="#888"/><use href="#bstar"/></symbol>
<symbol id="sh4" viewBox="0 0 24 24"><path d="M3 4h16v14H3z" fill="none" stroke="#aaa" stroke-width="2.500"/><path d="M1 2h4v4H1zM17 2h4v4h-4zM1 16h4v4H1z" fill="#fff" stroke="#888"/><use href="#bstar"/></symbol>
<symbol id="sh5" viewBox="0 0 24 24"><path d="M8 2l12 5-2 12-11 1-6-8z" fill="none" stroke="#aaa" stroke-width="2.500"/><path d="M6 0h4v4H6z" fill="#fff" stroke="#888"/><use href="#bstar"/></symbol>
<!-- selection row -->
<symbol id="sela" viewBox="0 0 24 24"><path d="M2 2h18v18H2z" fill="#b9b9a4" stroke="#555" stroke-dasharray="2 2"/><path d="M10 7l12 9-5 1 3 5-3 2-3-6-4 3z" fill="#fff" stroke="#888"/></symbol>
<symbol id="sele" viewBox="0 0 24 24"><path d="M8 9h13v14H8z" fill="#b9b9a4" stroke="#999"/><text x="0" y="14" class="t19">ε</text></symbol>
<symbol id="selno" viewBox="0 0 24 24"><path d="M2 2h13v13H2z" fill="#ffe44f" stroke="#a88912"/><path d="M7 7h13v13H7z" fill="#ffe44f" stroke="#a88912"/><circle cx="18.500" cy="18.500" r="4.500" fill="#fff" stroke="#d22" stroke-width="2"/><path d="M15 22l7-7" stroke="#d22" stroke-width="2"/></symbol>
<symbol id="selloc" viewBox="0 0 24 24"><path d="M1 1h15v15H1z" fill="#ffe44f" stroke="#a88912"/><path d="M15 17a3.500 3.500 0 0 1 8 0q0 3-4 7-4-4-4-7z" fill="#4f86ad"/><circle cx="19" cy="16.500" r="1.300" fill="#fff"/></symbol>
<symbol id="mask" viewBox="0 0 24 24"><rect width="24" height="24" fill="#fff"/><path d="M1 2q11-3 22 0-1 9-4 16l-4 6H9l-4-6Q2 11 1 2z" fill="#ccc" stroke="#777"/><path d="M4 3h16M4 8q3-2 6 1M14 9q3-3 6-1M12 9v5M7 16h10M9 19h6" stroke="#444" fill="none"/></symbol>
<symbol id="road" viewBox="0 0 24 24"><rect width="24" height="24" rx="3" fill="#f2c63c"/><path d="M8 3h8l4 7-3 7-13 6" fill="none" stroke="#e11" stroke-width="3"/><path d="M4 4h6l5 7-3 5-8 5" fill="none" stroke="#111" stroke-width="1.400"/></symbol>
<symbol id="geos" viewBox="0 0 24 24"><path d="M18 17l5 6" stroke="#111" stroke-width="3"/><circle cx="11" cy="11" r="9.500" fill="#20c4d8" stroke="#111" stroke-width="2.500"/><path d="M8 9a3 3 0 0 1 6 0q0 4-3 7-3-3-3-7z" fill="#175a7a"/><circle cx="11" cy="9" r="1.200" fill="#fff"/></symbol>
<symbol id="plot" viewBox="0 0 24 24"><path d="M3 23V2M1 21h22M1 4l2-3 2 3M20 19l3 2-3 2" stroke="#666" fill="none"/><path d="M4 19q6 0 9-8t9-7" stroke="#c026a8" stroke-width="2" fill="none"/><path d="M4 20q5-6 9-5t9-1" stroke="#3a9ab0" stroke-width="1.500" fill="none"/></symbol>
<symbol id="edc" viewBox="0 0 24 24"><rect x="1" y="1" width="22" height="22" fill="#fff" stroke="#154a78" stroke-width="1.600"/><text x="2.500" y="16" class="t9 b">EDC</text></symbol>
<symbol id="sld" viewBox="0 0 24 24"><rect width="24" height="24" fill="#1bc7e8"/><path d="M8 0h8v8H8z" fill="#5ef08a"/><path d="M16 0h8v8h-8z" fill="#ffb60a"/><path d="M8 8h8v8H8z" fill="#16a34a"/><path d="M16 8h8v8h-8z" fill="#ff7a1a"/><path d="M8 16h8v8H8z" fill="#b6e01a"/><path d="M16 16h8v8h-8z" fill="#d8333c"/><path d="M0 16h8v8H0z" fill="#2c98d8"/><text x="1" y="8" class="t10 k">S</text><text x="9.500" y="16" class="t10 k">L</text><text x="16.500" y="24" class="t10 k">D</text></symbol>
<!-- panel icons -->
<symbol id="brush" viewBox="0 0 16 16"><path d="M8 7l5-5 2 1-4 6z" fill="#c9872b"/><path d="M1 5l4 2 4-2 4 5-6 5-5-3z" fill="#f3c52f"/><path d="M1 5l4 2 4-2 2 3-6 3z" fill="#e0402a"/></symbol>
<symbol id="grp" viewBox="0 0 16 16"><path d="M1 6v8.500h8M3.500 4v8.500H11M6 2h8v8.500H6z" fill="none" stroke="#8b9290"/><path d="M8.500 3q1.500-3 3 0v7q-1.500 2-2.500 0V4" fill="none" stroke="#4c7a9a"/></symbol>
<symbol id="grpadd" viewBox="0 0 16 16"><use href="#grp"/><use href="#bplus" width="16" height="16"/></symbol>
<symbol id="eye" viewBox="0 0 16 16"><path d="M0 8q8-10 16 0-8 8-16 0z" fill="#fff" stroke="#888"/><circle cx="8" cy="7.500" r="3.300" fill="#6b93c4"/><circle cx="8" cy="7.500" r="1.500" fill="#234"/><path d="M1 4q7-6 14 0" fill="none" stroke="#999"/></symbol>
<symbol id="filt" viewBox="0 0 16 16"><path d="M1 2h14l-5.500 7v6h-3V9z" fill="#5c88bb" stroke="#3a618c" stroke-width=".7"/><path d="M1 1h14v2.500H1z" fill="#ffe44f" stroke="#b89c1a" stroke-width=".5"/></symbol>
<symbol id="eps" viewBox="0 0 16 16"><text x="0" y="11" class="t15">ε</text><path d="M8 15v-4q3-4 6 0v4" fill="none" stroke="#888" stroke-width="2"/></symbol>
<symbol id="exp" viewBox="0 0 16 16"><path d="M1 2h10M3 2v12M3 6h3M3 12h3" stroke="#888"/><path d="M4 5h3v3H4zM4 10.500h3v3H4z" fill="#fff" stroke="#ef9b1e"/><path d="M10 1h3v7h3l-4.500 6L7 8h3z" fill="#5c88bb" stroke="#28486d" stroke-width=".6"/></symbol>
<symbol id="col" viewBox="0 0 16 16"><path d="M1 2h10M3 2v12M3 6h3M3 12h3" stroke="#888"/><path d="M4 5h3v3H4zM4 10.500h3v3H4z" fill="#fff" stroke="#ef9b1e"/><path d="M10 14h3V7h3l-4.500-6L7 7h3z" fill="#5c88bb" stroke="#28486d" stroke-width=".6"/></symbol>
<symbol id="rem" viewBox="0 0 16 16"><path d="M1 1h12v12H1z" fill="#f4f4f4" stroke="#888"/><rect x="9" y="10" width="6.500" height="5" rx="1" fill="#e44848"/><path d="M10.500 12.500h3.500" stroke="#fff"/></symbol>
<symbol id="rl" viewBox="0 0 13 13"><rect width="13" height="13" fill="#bcd0e8"/><path d="M0 0h4v4H0zM9 0h4v4H9zM5 5h4v4H5zM0 9h4v4H0z" fill="#26384f"/><path d="M5 0h4v4H5zM0 5h4v4H0zM9 5h4v4H9z" fill="#9dbadc"/><path d="M4 9h5v4H4z" fill="#7fa3d0"/><path d="M9 9h4v4H9z" fill="#fff"/></symbol>
<symbol id="gears" viewBox="0 0 16 16"><g fill="none" stroke-dasharray="1.600 1"><circle cx="5" cy="5" r="3" stroke="#d22" stroke-width="4"/><circle cx="12" cy="8" r="2" stroke="#777" stroke-width="3"/><circle cx="7" cy="13" r="1.500" stroke="#8fb0de" stroke-width="3"/></g></symbol>
<symbol id="pg2" viewBox="0 0 16 16"><path d="M3 1h7l3 3v11H3z" fill="#f6f6f6" stroke="#999"/><path d="M5 6h6M5 8.500h6M5 11h6M5 13h4" stroke="#999"/></symbol>
<symbol id="mod" viewBox="0 0 16 16"><path d="M1 2h10v9H1z" fill="#ababa0"/><path d="M14 3l1 2-6 9-2 1v-2z" fill="#aaa"/></symbol>
<symbol id="wrench" viewBox="0 0 16 16"><path d="M7 7l8 8" stroke="#8a7320" stroke-width="4"/><path d="M8 8l6.500 6.500" stroke="#f2dc78" stroke-width="2.600"/><path d="M1 4q1 4 5 3.500Q9 5 5 1v3L3 5z" fill="#ddd" stroke="#777" stroke-width=".8"/></symbol>
<symbol id="q" viewBox="0 0 16 16"><circle cx="8" cy="8" r="5.500" fill="#fff" stroke="#79ab34" stroke-width="3"/><path d="M9 9l5 5.500" stroke="#5d9a2a" stroke-width="3"/><circle cx="8.500" cy="8" r="1.800" fill="#ec8b23"/></symbol>
<symbol id="mv" viewBox="0 0 16 16"><g fill="#eee" stroke="#aaa"><path d="M1 7h8v7H1z"/><path d="M3.500 5h8v7h-8z"/><path d="M6.500 1.500H15v8H6.500z"/></g></symbol>
<symbol id="gm" viewBox="0 0 16 16"><path d="M9 0h5l-3 7-4 1z" fill="#b8c4b4" stroke="#8a968a" stroke-width=".5"/><path d="M1 11.500h5v3H1zM9 11.500h5v3H9zM5 13h5" fill="#8fb4bd" stroke="#6a909a"/><path d="M7.500 7v5" stroke="#97a" stroke-width=".6"/></symbol>
<symbol id="gdal" viewBox="0 0 16 16"><circle cx="9.500" cy="8" r="6" fill="#58a9d8"/><path d="M7 4l5 0 1 4-3 3-3-3z" fill="#3a8a5a"/><path d="M1 3l7-3M3 0l3 4" stroke="#333"/><text x="0" y="15.500" class="t7 k">GDAL</text></symbol>
<symbol id="saga" viewBox="0 0 16 16"><path d="M12 2.500A7 7 0 1 0 14.500 10" fill="none" stroke="#1f609f" stroke-width="1.700"/><path d="M2 4h9l3-2M1.500 9L8 4l6.500 5H9v5M8 9L3.500 12" fill="none" stroke="#1f609f" stroke-width="1.400"/></symbol>
<symbol id="gridav" viewBox="0 0 16 16"><rect width="16" height="16" fill="#e8c4c4"/><path d="M0 5h6v11H0z" fill="#b72a2e"/><path d="M6 9h4v7H6z" fill="#cf6b6e"/><path d="M0 0h6v5H0z" fill="#d99a9a"/><circle cx="12" cy="4" r="2" fill="#555"/></symbol>
<symbol id="rnd" viewBox="0 0 16 16"><rect width="16" height="16" fill="#3a22b8"/><path d="M0 0h5v5H0zM10 5h6v5h-6zM5 11h5v5H5z" fill="#e0262a"/><path d="M5 0h4v4H5zM0 10h4v6H0z" fill="#2c9a2c"/><path d="M10 0h6v4h-6z" fill="#c223a8"/></symbol>
<symbol id="rnda" viewBox="0 0 16 16"><use href="#rnd"/><path d="M0 14q4 0 5-6t3-6 3 6 5 6" fill="none" stroke="#fff" stroke-width="1.600"/></symbol>
<symbol id="rndb" viewBox="0 0 16 16"><use href="#rnd"/><path d="M1 1q1 11 14 12" fill="none" stroke="#fff" stroke-width="1.600"/></symbol>
<symbol id="mag" viewBox="0 0 13 13"><circle cx="5" cy="5" r="4.200" fill="none" stroke="#999" stroke-width="1.200"/><path d="M8 8l4.500 4.500" stroke="#999" stroke-width="1.500"/></symbol>
<symbol id="clr" viewBox="0 0 13 10"><path d="M4 0h9v10H4L0 5z" fill="#979797"/><path d="M5.500 2.500l4.500 5M10 2.500l-4.500 5" stroke="#fff" stroke-width="1.200"/></symbol>
<symbol id="flt" viewBox="0 0 11 11"><rect x=".5" y=".5" width="10" height="10" rx="1.500" fill="none" stroke="#666"/><path d="M4.500 2.500h4v4h-4zM2.500 4.500h4v4h-4z" fill="#ebebeb" stroke="#666" stroke-width=".9"/></symbol>
<symbol id="cls" viewBox="0 0 11 11"><rect x=".5" y=".5" width="10" height="10" rx="1.500" fill="none" stroke="#666"/><path d="M3 3l5 5M8 3l-5 5" stroke="#555" stroke-width="1.900"/></symbol>
<symbol id="ext" viewBox="0 0 16 16"><path d="M2 4l4-2 6 11-3 2zM7 1l4 0 4 8-2 3z" fill="#ddd" stroke="#444"/><path d="M4 6l8-3M6 10l8-4" stroke="#444"/></symbol>
<symbol id="lock" viewBox="0 0 13 16"><path d="M3 8V5q0-4 3.500-4T10 5v3" fill="none" stroke="#888" stroke-width="1.600"/><rect x=".5" y="7" width="12" height="8.500" rx="1" fill="#666"/></symbol>
<symbol id="crs" viewBox="0 0 16 14"><ellipse cx="8" cy="7" rx="7.500" ry="6.500" fill="#888"/><path d="M0 7h16M2 4h12M2 10h12M8 0v14" stroke="#ddd" stroke-width=".8"/><ellipse cx="8" cy="7" rx="3.500" ry="6.500" fill="none" stroke="#ddd" stroke-width=".8"/></symbol>
<symbol id="msg" viewBox="0 0 16 16"><path d="M8 1q8 0 8 6t-7 6q-2 2-5 2l1-3q-5-1-5-5 0-6 8-6z" fill="#555"/><path d="M3 7h2M7 7h2M11 7h2" stroke="#fff" stroke-width="1.600"/></symbol>
<symbol id="tick" viewBox="0 0 14 14"><path d="M3.500 6.500l2.500 4 4.500-8.500" fill="none" stroke="#222" stroke-width="1.800"/></symbol>
</defs>
</svg>

<div class="window">
  <header class="titlebar"><span class="lights"><i></i><i></i><i></i></span><span class="wtitle">module9 — QGIS</span></header>

  <div class="bar">
    <b class="grip first"></b>
    <svg class="i"><use href="#new"/></svg><svg class="i"><use href="#open"/></svg><svg class="i"><use href="#save"/></svg><svg class="i"><use href="#layout"/></svg><svg class="i"><use href="#laymgr"/></svg><svg class="i"><use href="#style"/></svg>
    <b class="grip"></b>
    <svg class="i"><use href="#hand"/></svg><svg class="i"><use href="#pan"/></svg><svg class="i on"><use href="#zin"/></svg><svg class="i"><use href="#zout"/></svg><svg class="i"><use href="#zfull"/></svg><svg class="i off"><use href="#zsel"/></svg><svg class="i off"><use href="#zlay"/></svg><svg class="i off"><use href="#znat"/></svg><svg class="i"><use href="#zlast"/></svg><svg class="i off"><use href="#znext"/></svg><svg class="i"><use href="#nmap"/></svg><svg class="i"><use href="#n3d"/></svg><svg class="i"><use href="#nbook"/></svg><svg class="i"><use href="#book"/></svg><svg class="i"><use href="#clock"/></svg><svg class="i"><use href="#refresh"/></svg>
    <b class="grip"></b>
    <svg class="i off"><use href="#ident"/></svg><svg class="i off"><use href="#table"/></svg><svg class="i off"><use href="#abacus"/></svg><svg class="i on"><use href="#gear"/></svg><svg class="i"><use href="#sum"/></svg><svg class="i"><use href="#meas"/></svg><u></u><svg class="i on"><use href="#tip"/></svg><svg class="i off"><use href="#act"/></svg><u></u><svg class="i"><use href="#tann"/></svg><u></u>
    <b class="grip"></b>
    <svg class="i off"><use href="#cad"/></svg><svg class="i off"><use href="#tri"/></svg><svg class="i off"><use href="#bmove"/></svg><u></u><svg class="i off"><use href="#brotate"/></svg><svg class="i off"><use href="#bsimp"/></svg><svg class="i off"><use href="#bring"/></svg><svg class="i off"><use href="#bpart"/></svg><svg class="i off"><use href="#bfill"/></svg><svg class="i off"><use href="#bdring"/></svg><svg class="i off"><use href="#bdpart"/></svg><svg class="i off"><use href="#breshape"/></svg><svg class="i off"><use href="#boffset"/></svg><svg class="i off"><use href="#vrot"/></svg><svg class="i off"><use href="#vtrim"/></svg><svg class="i off"><use href="#bcut"/></svg><svg class="i off"><use href="#bcut"/></svg><svg class="i off"><use href="#bmerge"/></svg><svg class="i off"><use href="#hatch"/></svg><svg class="i off"><use href="#rotsym"/></svg><u></u>
  </div>

  <div class="bar">
    <b class="grip first"></b>
    <span class="drop"><svg class="i off"><use href="#pencils"/></svg></span><svg class="i off"><use href="#pencil"/></svg><svg class="i off"><use href="#savee"/></svg><svg class="i off"><use href="#addpoly"/></svg><svg class="i off"><use href="#vtool"/></svg><u></u><svg class="i off"><use href="#modattr"/></svg><svg class="i off"><use href="#trash"/></svg><svg class="i off"><use href="#cut"/></svg><svg class="i off"><use href="#copy"/></svg><svg class="i off"><use href="#paste"/></svg><svg class="i off"><use href="#undo"/></svg><svg class="i off"><use href="#redo"/></svg>
    <b class="grip"></b>
    <svg class="i"><use href="#dsm"/></svg><svg class="i"><use href="#gpkgn"/></svg><svg class="i"><use href="#nvec"/></svg><svg class="i"><use href="#nquill"/></svg><svg class="i"><use href="#chip"/></svg><s></s><svg class="i"><use href="#nvbox"/></svg><s></s>
    <b class="grip tight"></b>
    <svg class="i off"><use href="#abc"/></svg><svg class="i off"><use href="#diag"/></svg><s></s><svg class="i"><use href="#lpin"/></svg><svg class="i"><use href="#lred"/></svg><s></s><svg class="i off"><use href="#l1"/></svg><svg class="i off"><use href="#l2"/></svg><svg class="i off"><use href="#l3"/></svg><svg class="i off"><use href="#l4"/></svg><svg class="i off"><use href="#l5"/></svg>
    <b class="grip"></b>
    <svg class="i"><use href="#db"/></svg>
    <b class="grip"></b>
    <svg class="i"><use href="#hexa"/></svg><span class="drop"><svg class="i framed"><use href="#gadd"/></svg></span><svg class="i"><use href="#gsrch"/></svg><svg class="i"><use href="#plug"/></svg><svg class="i"><use href="#gbin"/></svg>
    <b class="grip"></b>
    <svg class="i"><use href="#orbit"/></svg>
    <b class="grip"></b>
    <svg class="i"><use href="#help"/></svg>
    <span class="fill"></span>
    <b class="grip"></b>
    <svg class="i"><use href="#ring"/></svg><u></u><svg class="i"><use href="#xy"/></svg><svg class="i"><use href="#edp"/></svg><svg class="i"><use href="#edx"/></svg><u></u><svg class="i"><use href="#edz"/></svg><svg class="i"><use href="#medge"/></svg><svg class="i"><use href="#n123"/></svg><svg class="i"><use href="#two"/></svg><u></u><svg class="i off"><use href="#az"/></svg><span class="more">»</span>
  </div>

  <div class="bar">
    <b class="grip first"></b>
    <svg class="i off"><use href="#h1"/></svg><svg class="i off"><use href="#h2"/></svg><svg class="i off"><use href="#h1"/></svg><svg class="i off"><use href="#h2"/></svg><svg class="i off"><use href="#s1"/></svg><svg class="i off"><use href="#s2"/></svg><svg class="i off"><use href="#c1"/></svg><svg class="i off"><use href="#c2"/></svg><svg class="i off"><use href="#g1"/></svg><svg class="i off"><use href="#g2"/></svg>
    <b class="grip"></b>
    <svg class="i on"><use href="#magnet"/></svg><span class="drop"><svg class="i"><use href="#snapv"/></svg></span><span class="drop"><svg class="i on"><use href="#dots"/></svg></span>
    <span class="field spin tol">0<em></em></span><span class="field combo unit">px<em></em></span>
    <svg class="i"><use href="#ty"/></svg><span class="drop"><svg class="i"><use href="#foot"/></svg></span><svg class="i"><use href="#isx"/></svg><svg class="i"><use href="#bolt"/></svg><u></u><svg class="i"><use href="#trace"/></svg>
    <b class="grip"></b>
    <svg class="i"><use href="#pyc"/></svg><svg class="i"><use href="#rsamp"/></svg><svg class="i"><use href="#tm"/></svg><svg class="i"><use href="#fimp"/></svg><svg class="i"><use href="#fire"/></svg><svg class="i"><use href="#four"/></svg><svg class="i"><use href="#stack"/></svg><svg class="i"><use href="#earth"/></svg><svg class="i"><use href="#bino"/></svg><svg class="i"><use href="#ref"/></svg><svg class="i"><use href="#tiles"/></svg><svg class="i"><use href="#leaf"/></svg><svg class="i"><use href="#ngrid"/></svg><svg class="i"><use href="#nodes"/></svg><svg class="i"><use href="#pca"/></svg><svg class="i"><use href="#layers3"/></svg><svg class="i"><use href="#info"/></svg><svg class="i"><use href="#swipe"/></svg><svg class="i"><use href="#oeo"/></svg><svg class="i"><use href="#gmap"/></svg>
    <b class="grip"></b>
    <svg class="i off"><use href="#sh1"/></svg><u></u><svg class="i off"><use href="#sh2"/></svg><u></u><svg class="i off"><use href="#sh3"/></svg><u></u><svg class="i off"><use href="#sh4"/></svg><u></u><svg class="i off"><use href="#sh5"/></svg><u></u>
  </div>

  <div class="bar last">
    <b class="grip first"></b>
    <svg class="i off"><use href="#sela"/></svg><u></u><svg class="i off"><use href="#sele"/></svg><u></u><svg class="i"><use href="#selno"/></svg><u></u><svg class="i"><use href="#selloc"/></svg>
    <b class="grip"></b><svg class="i"><use href="#mask"/></svg>
    <b class="grip"></b><svg class="i"><use href="#road"/></svg>
    <b class="grip"></b><svg class="i"><use href="#geos"/></svg>
    <span class="field combo country">Philippines<em></em></span><span class="field osm">Search for...</span>
    <b class="grip"></b><svg class="i"><use href="#plot"/></svg>
    <b class="grip"></b><b class="grip"></b><svg class="i"><use href="#edc"/></svg>
    <b class="grip"></b><svg class="i"><use href="#sld"/></svg><b class="grip"></b>
  </div>

  <main class="work">
    <nav class="side">
      <b class="hgrip"></b>
      <div><svg class="v"><use href="#avec"/></svg></div>
      <div><svg class="v"><use href="#rast"/></svg></div>
      <div><svg class="v"><use href="#mesh"/></svg></div>
      <div><svg class="v"><use href="#comma"/></svg></div>
      <div><svg class="v"><use href="#aquill"/></svg></div>
      <div><svg class="v"><use href="#avbox"/></svg></div>
      <div><svg class="v"><use href="#pg"/></svg><u></u></div>
      <div><svg class="v"><use href="#wms"/></svg><u></u></div>
      <div><svg class="v"><use href="#wcs"/></svg></div>
      <div><svg class="v"><use href="#wfs"/></svg><u></u></div>
      <div><svg class="v"><use href="#gpkgn"/></svg><u></u></div>
      <b class="hgrip mid"></b>
      <div class="c"><svg class="v"><use href="#topo"/></svg></div>
      <div class="c"><svg class="v"><use href="#tblref"/></svg></div>
      <div class="c"><svg class="v"><use href="#cross"/></svg></div>
    </nav>

    <section class="panel layers">
      <div class="ptitle"><span>Layers</span><svg><use href="#flt"/></svg><svg><use href="#cls"/></svg></div>
      <div class="ptools">
        <svg class="p"><use href="#brush"/></svg><svg class="p"><use href="#grpadd"/></svg><span class="drop sm"><svg class="p"><use href="#eye"/></svg></span><svg class="p"><use href="#filt"/></svg><svg class="p off"><use href="#eps"/></svg><u></u><svg class="p"><use href="#exp"/></svg><svg class="p"><use href="#col"/></svg><svg class="p"><use href="#rem"/></svg>
      </div>
      <div class="tree">
        <div class="row"><i class="dn"></i><span class="cb"></span><svg class="rl"><use href="#rl"/></svg><span class="g">Reprojected_HRSL_AUS_Tasmania_Population</span></div>
        <div class="row leg"><span class="sw k0"></span>0,0000</div>
        <div class="row leg"><span class="sw k1"></span>2,0081</div>
        <div class="row leg"><span class="sw k2"></span>4,0162</div>
        <div class="row leg"><span class="sw k3"></span>6,0243</div>
        <div class="row leg"><span class="sw k4"></span>8,0324</div>
        <div class="row"><i></i><span class="cb"></span><span class="sw dash"></span><span class="g">module9 tasmania</span></div>
        <div class="row sel"><i class="dn"></i><span class="cb"><svg><use href="#tick"/></svg></span><svg class="gi"><use href="#grp"/></svg>reprojected land cover</div>
        <div class="row sub"><i></i><span class="cb"><svg><use href="#tick"/></svg></span><svg class="rl"><use href="#rl"/></svg><strong>LandCover_2019_28355</strong></div>
        <div class="row sub"><i></i><span class="cb"><svg><use href="#tick"/></svg></span><svg class="rl"><use href="#rl"/></svg><strong>LandCover_2018_28355</strong></div>
        <div class="row sub"><i></i><span class="cb"><svg><use href="#tick"/></svg></span><svg class="rl"><use href="#rl"/></svg><strong>LandCover_2017_28355</strong></div>
        <div class="row sub"><i></i><span class="cb"><svg><use href="#tick"/></svg></span><svg class="rl"><use href="#rl"/></svg><strong>LandCover_2016_28355</strong></div>
        <div class="row sub"><i></i><span class="cb"><svg><use href="#tick"/></svg></span><svg class="rl"><use href="#rl"/></svg><strong>LandCover_2015_28355</strong></div>
        <div class="row"><i class="dn"></i><span class="cb"></span><svg class="gi"><use href="#grp"/></svg>land cover</div>
        <div class="row sub"><i class="rt"></i><span class="cb"></span><svg class="rl"><use href="#rl"/></svg><span class="g">LandCover_2019</span></div>
        <div class="row sub"><i></i><span class="cb"></span><svg class="rl"><use href="#rl"/></svg><span class="g">LandCover_2018</span></div>
        <div class="row sub"><i></i><span class="cb"></span><svg class="rl"><use href="#rl"/></svg><span class="g">LandCover_2017</span></div>
        <div class="row sub"><i></i><span class="cb"></span><svg class="rl"><use href="#rl"/></svg><span class="g">LandCover_2016</span></div>
        <div class="row sub"><i></i><span class="cb"></span><svg class="rl"><use href="#rl"/></svg><span class="g">LandCover_2015</span></div>
        <div class="row"><i class="rt"></i><span class="cb"></span><svg class="gi"><use href="#grp"/></svg>srtm</div>
      </div>
    </section>

    <div class="split"></div>

    <section class="canvas">
      <svg class="map" viewBox="445 181 981 847">
        <defs>
          <path id="landA" transform="translate(700 440) scale(.3827 .3333)" d="M100 90l5-25 13 25 22 15 25 7 40 6 20 7 15 15 22 10 28-5 15 0-3-47 13 20-7 22 17 23 20 5 30 14 17-12 13 25 35 17 30 3 10 25 25 22 30 6 30 17 35 20 40 21 50 4 25 3 30-11 10-12 13 20 10-5 22-30 20-15 25 10 15-28 20-7 25-5 20-15 35 7 15 8 25-15 15-20 27-2 8 19 15 15 30-12 20-30 15-40 25-13 15 16 40 15 25-8 17-25 8-42 25 4 25 18 15 25 20 5 17 30 16 20 14 31-22 21 2 28-7 40 5 40 15 15 7 13-14 27-13 25-5 40 5 40 15 25-2 35-11 40-2 50 13 32-3 33-10 35 15 45-20-3-40-7-25 15-5 30-15 40v30H330l-18-130-17-50-25-25-25-35-15-25-15-30-20-5-3-30-7-30-20-50-30-40 8-20-3-25-20-35-12-30-3-50-7-40-18-15 5-25-5-20 15-15 15-10-2-45-6-35z"/>
          <path id="landB" transform="translate(900 690) scale(.3333)" d="M-20 0H975L970 50 988 90 975 105 965 85 945 75 910 75 885 82 882 120 862 150 855 190 858 215 848 245 855 270 850 300 830 305 815 300 808 325 825 345 830 380 825 415 805 435 798 465 785 500 770 505 735 500 705 490 695 465 670 472 655 485 650 510 635 505 600 490 595 520 585 555 575 560 590 590 565 570 560 600 550 640 555 680 545 705 510 705 480 690 490 712 470 735 475 750 460 785 435 785 425 800 440 820 425 840 415 870 425 880 400 897 380 880 345 890 320 870 300 850 285 838 240 843 195 835 -20 835z"/>
          <path id="islB" transform="translate(900 690) scale(.3333)" d="M965 105l10 0 5 20 12 0-7 25-15 25-15-20 12-20zM948 190l17-5 15 20-20 0zM865 350l15-17 25 22 10 20-55 3zM870 392l17 10-27 18zM800 478l20 12 28 10-3 35-25 25-30 10-10-40 5-30zM705 560l15 5-5-40 25 15 5 30 35 20 20-20 20 0 15 40 10 30-15 20 15 25-45-35-10-10-5 25-20 15-25-15-10-25 10-20-35-20zM640 520l20-5 5 35-15 25-10-5zM612 540l13 35-5 5zM585 600l15 0 10 40 12 40-22 12-5-22 5-20-30-5zM570 700l15 20 5 35 15-5-15 30-10 48-15-3-15-35-20-5 0-30 15-15zM495 780l30 20 25-15-20 20-20 15zM195 872l17 3-7 7z"/>
          <path id="islN" transform="translate(580 180) scale(.4592 .3333)" d="M105 290l13 0 12 10 30 30 0 65 5 15 0 50 6 10-1 30-10 30-15 25-30 20-5 22-12-25-3-27 5-15-2-40-13-20 3-40 2-30-5-40 20-15 5-25zM1310 345l15 25 20 30 33 60 32 15-2 60-13 20 15 5 12 45-14 5-23-8-5 23-20 7-20-12-7-40-3-35-20-35-20-10 10-20-5-40-30-5-10-15 15-18 15-7 0-35 15 5zM1325 685l35-13 25 3 10-10 15 7 15-17 15 30 17 10 6 25-23 30-15-10-10-15-25 10-15-10-30 3-20-23zM1355 765l15-10 25-5-5 30-12 23-18-18zM400 706l20 4 5 12-13 28-12 2-12-17 12-10zM370 715l0 55-5 48-8-6-5-47 10-10zM400 865l12-20 3-35 3 30 17 15 20 20-25 0-25 13zM1120 200l6-6 5 6 6 8-6 10-5 2-6-8zM1109 192l8-3 0 8-4 10-5 2zM841 75h4v6h-4zM1021 68l5-3 0 8-4 4zM919 207l5-6 1 2-4 6zM1065 231h3v3h-3zM1294 323l12-1 4 6-8 4zM1319 305l7-6 4 4-7 8zM1258 503l3 5-10 35-6-3 6-18zM1278 650l8 4 10-2-8 9zM1302 628l5 2-7 9zM1424 458l10 8-10 3zM1410 633l8-2 2 14-8 2zM1395 622l10 4-6 3zM1310 890l15-4 8 10-10 4zM513 877l5 8 6 14-6 1zM1346 877l5 4 9-1-4 4zM1414 770l4-12 1 8-3 6zM75 333l4 3-3 4zM1230 321h3v3h-3zM1291 541h3v4h-3zM1294 587h3v4h-3z"/>
          <clipPath id="land"><use href="#landA"/><use href="#landB"/><use href="#islB"/><use href="#islN"/></clipPath>
          <filter id="rough" x="0" y="0" width="100%" height="100%"><feTurbulence type="fractalNoise" baseFrequency=".18" numOctaves="3" seed="4"/><feDisplacementMap in="SourceGraphic" scale="6" xChannelSelector="R" yChannelSelector="G"/></filter>
          <filter id="speck" x="0" y="0" width="100%" height="100%" color-interpolation-filters="sRGB">
            <feGaussianBlur in="SourceAlpha" stdDeviation="6" result="d"/>
            <feTurbulence type="fractalNoise" baseFrequency=".16 .19" numOctaves="5" seed="11" result="n"/>
            <feComposite in="d" in2="n" operator="arithmetic" k2=".3" k3="1"/>
            <feColorMatrix values="0 0 0 0 .12  0 0 0 0 0  0 0 0 0 0  0 0 0 30 -20.600"/>
          </filter>
          <filter id="blue" x="-50%" y="-50%" width="200%" height="200%" color-interpolation-filters="sRGB">
            <feGaussianBlur in="SourceAlpha" stdDeviation="2" result="d"/>
            <feTurbulence type="fractalNoise" baseFrequency=".4" numOctaves="3" seed="3" result="n"/>
            <feComposite in="d" in2="n" operator="arithmetic" k2=".6" k3="1"/>
            <feColorMatrix values="0 0 0 0 .18  0 0 0 0 0  0 0 0 0 .42  0 0 0 30 -25"/>
          </filter>
        </defs>
        <g filter="url(#rough)">
          <rect x="445" y="181" width="981" height="847" fill="#fff"/>
          <g fill="#720000"><use href="#landA"/><use href="#landB"/><use href="#islB"/><use href="#islN"/></g>
          <g clip-path="url(#land)">
            <g filter="url(#speck)">
              <rect x="445" y="181" width="981" height="847" opacity=".08"/>
              <g transform="translate(700 440) scale(.3827 .3333)" fill="none" stroke="#000" stroke-linecap="round" stroke-linejoin="round">
                <path stroke-width="36" d="M115 115l80 20M120 120l0 50M105 230l20 30M130 310l-5 20M140 400l60 60M190 490l20 60M330 160l50 30M440 230l60 60 90 50 70 10M180 210l20 20M300 300l-50 80 0 60M560 340l20 80M670 340l20 60M320 690l-30 30M300 620l20 40M1280 125l5 60M1145 200l60-15M1200 290l20 10M960 330l20 40M730 350l30 40M640 460l60-20M1310 200l40 10"/>
                <path stroke-width="60" d="M760 480l60 40 60 30 50 60 30 60M880 500l90 10 40 60 40 50M660 590l70 50 30 80 20 100M730 540l40 20M1030 620l50 90 20 80-30 100M940 640l120 40"/>
                <path stroke-width="16" d="M1140 670l60-20 40-60 50-30 50 5M1140 680l110 10M1200 620l-40 50M1090 500l50 20 20 40M640 580l100-10M600 650l30-60M1060 330l80 10 30 40"/>
                <path stroke-width="24" opacity=".6" d="M480 480l100 60M440 640l60 90M550 700l60 100M340 730l60 20M520 780l200 90"/>
              </g>
              <g transform="translate(900 690) scale(.3333)" fill="none" stroke="#000" stroke-linecap="round" stroke-linejoin="round">
                <path stroke-width="60" d="M290 30l30 60M600 30l50 60 10 40M640 150l-40 40M360 250l40 60 40 100M450 210l80-20 20 120M520 80l0 80M230 610l60 60M560 380l60 60"/>
                <path stroke-width="30" d="M380 100l60 80M200 340l10 60M210 825l50 5M480 340l70 50M660 420l50 60 60 20M840 270l-20 20M280 380l20 10M200 520l60 60M840 350l-10 60M480 550l-50 80M700 170l40 10"/>
              </g>
              <g transform="translate(580 180) scale(.4592 .3333)" fill="none" stroke="#000" stroke-width="40" stroke-linecap="round"><path d="M115 310l20 50-20 60M105 360l0 150 40-20M100 440l30 90M130 490l30 30M1330 450l50 60 0 60M1340 480l10 0M1370 710l80 0M1370 775l5 10M1340 580l60 0M410 865l10 5M358 780l3 20"/></g>
            </g>
            <g filter="url(#blue)" stroke="#000" fill="none" stroke-width="7"><path d="M1066 592l10 14M1094 838l8 22 0 12M878 520l16 10M900 532l10 5M932 547l8 4M960 553l8 2M797 495l3 6M1118 855l14 6M1090 870l4 8"/></g>
          </g>
          <g fill="#fff" stroke="#fff">
            <path stroke="none" transform="translate(700 440) scale(.3827 .3333)" d="M845 275l10 25 20 15 15 10 15 25 10 25 10 30 20 20 10 25 18 20-7 8-22-28-18-30-18-20-10-25-15-25-28-8-15-18 15-10z"/>
            <g fill="none" stroke-width="1.600"><path d="M995 551l-1 13M966 552l4 9M790 486l6 6M776 640l12-4"/><path stroke-width="3" d="M1078 827l10 12 10 15 3 12M1052 891l-3 16 14 12M1111 837l8 7 12-2 2 6"/><path stroke-width="5" d="M1205 710l6-10M1224 590l8-5M1224 575l7-6"/></g>
          </g>
          <path d="M1223 540l1 20M1227 570l6 2M1209 700l2-5M1225 592l-4 8" stroke="#d00" fill="none"/>
        </g>
      </svg>
    </section>

    <div class="split right"></div>

    <section class="panel tools">
      <div class="ptitle"><span>Processing Toolbox</span><svg><use href="#flt"/></svg><svg><use href="#cls"/></svg></div>
      <div class="ptools">
        <span class="drop sm"><svg class="p"><use href="#gears"/></svg></span><span class="drop sm"><svg class="p"><use href="#py"/></svg></span><svg class="p"><use href="#clock"/></svg><svg class="p"><use href="#pg2"/></svg><s></s><svg class="p off"><use href="#mod"/></svg><s></s><svg class="p"><use href="#wrench"/></svg>
      </div>
      <div class="field find"><svg class="mg"><use href="#mag"/></svg>merge<svg class="cl"><use href="#clr"/></svg></div>
      <div class="tree alg">
        <div class="row"><i class="dn"></i><svg class="gi"><use href="#q"/></svg>Cartography</div>
        <div class="row ch"><svg class="gi"><use href="#gear"/></svg>Combine style databases</div>
        <div class="row"><i class="dn"></i><svg class="gi"><use href="#q"/></svg>Database</div>
        <div class="row ch"><svg class="gi"><use href="#gear"/></svg>Package layers</div>
        <div class="row"><i class="dn"></i><svg class="gi"><use href="#q"/></svg>Vector general</div>
        <div class="row ch"><svg class="gi"><use href="#mv"/></svg>Merge vector layers</div>
        <div class="row"><i class="dn"></i><svg class="gi"><use href="#q"/></svg>Vector geometry</div>
        <div class="row ch"><svg class="gi"><use href="#gear"/></svg>Merge lines</div>
        <div class="row"><i class="dn"></i><svg class="gi"><use href="#gdal"/></svg>GDAL</div>
        <div class="row cat"><i class="dn"></i>Raster miscellaneous</div>
        <div class="row sel leaf"><svg class="gi"><use href="#gm"/></svg>Merge</div>
      </div>
      <div class="tabs"><span class="t1">Value Tool</span><span class="t2 cur">Processing Toolbox</span><span class="t3">Layer Styling</span><span class="t4">Results Viewer</span></div>
    </section>
  </main>

  <footer class="status">
    <span class="field loc"><svg class="mg"><use href="#mag"/></svg>merge<svg class="cl"><use href="#clr"/></svg></span>
    <span class="fill"></span>
    <label class="s1">Coordinate</label><span class="field coord">124187,5329049</span><svg class="ex"><use href="#ext"/></svg>
    <label class="s2">Scale</label><span class="field combo scale">1:1770598<em></em></span><svg class="lk"><use href="#lock"/></svg>
    <label class="s3">Magnifier</label><span class="field spin magn">100%<em></em></span>
    <label class="s4">Rotation</label><span class="field spin rot">0,0 °<em></em></span>
    <span class="cb"><svg><use href="#tick"/></svg></span><label class="s5">Render</label>
    <svg class="cr"><use href="#crs"/></svg><label class="s6">EPSG:28355</label><svg class="ms"><use href="#msg"/></svg>
  </footer>

  <div class="popup">
    <ul>
      <li><svg class="pm"><use href="#mag"/></svg>Mergelweg, Maastricht (weg)</li>
      <li><svg class="pm"><use href="#mag"/></svg>Mergelweg, Voerendaal (weg)</li>
      <li class="head">Processing Algorithms</li>
      <li class="cur"><svg><use href="#gm"/></svg><span>Merge</span></li>
      <li><svg><use href="#gear"/></svg>Merge lines</li>
      <li><svg><use href="#mv"/></svg>Merge vector layers</li>
      <li><svg><use href="#gear"/></svg>Combine style databases</li>
      <li><svg><use href="#gear"/></svg>Package layers</li>
      <li><svg><use href="#gridav"/></svg>Grid (Moving average)</li>
      <li><svg><use href="#saga"/></svg>Geometric figures</li>
      <li><svg><use href="#saga"/></svg>Paramemelton ruggedness number</li>
      <li><svg><use href="#saga"/></svg>Multiple linear regression analysis</li>
      <li><svg><use href="#rnda"/></svg>Create random raster layer (negative binomial distribution)</li>
      <li><svg><use href="#saga"/></svg>Multiple linear regression analysis (shapes)</li>
      <li><svg><use href="#saga"/></svg>Multiple regression analysis (points/raster)</li>
      <li><svg><use href="#saga"/></svg>Multiple regression analysis (raster/raster)</li>
      <li><svg><use href="#rndb"/></svg>Create random raster layer (geometric distribution)</li>
      <li><svg><use href="#saga"/></svg>Multilevel b-spline interpolation for categories</li>
      <li><svg><use href="#saga"/></svg>Gwr for multiple predictors (gridded model output)</li>
      <li><svg><use href="#saga"/></svg>Multiple regression analysis (grid and predictor grids)</li>
    </ul>
    <div class="scroll"><i class="up"></i><b></b><i class="down"></i></div>
  </div>
</div>
</body>
</html>
```
FILE: styles.css
```css
* { box-sizing: border-box; }
body { margin: 0; width: 1920px; height: 1059px; overflow: hidden; background: #000; font: 13px/16px Inter, "Liberation Sans", sans-serif; letter-spacing: -.12px; color: #1a1a1a; }
.sprite { position: absolute; width: 0; height: 0; }
svg { display: block; flex: none; }
svg text { font-family: "Open Sans", sans-serif; font-weight: 700; fill: #777; letter-spacing: -.3px; }
svg .t7 { font-size: 6.5px; } svg .t8 { font-size: 8px; } svg .t9 { font-size: 9px; } svg .t10 { font-size: 10px; } svg .t11 { font-size: 11px; }
svg .t12 { font-size: 12px; } svg .t13 { font-size: 13px; } svg .t15 { font-size: 15px; } svg .t19 { font-size: 19px; }
svg .w { fill: #fff; } svg .k { fill: #111; } svg .r { fill: #e11; } svg .b { fill: #154a78; }

.window { position: relative; display: flex; flex-direction: column; height: 1059px; border-top: 1px solid #a9b3a6; padding: 1px 0 0 1px; }
.titlebar { display: flex; align-items: center; height: 22px; background: linear-gradient(#e4e4e4, #cbcbcb); border-bottom: 1px solid #989898; border-radius: 5px 5px 0 0; }
.lights { display: flex; gap: 8px; padding-left: 8px; width: 100px; }
.lights i { width: 12px; height: 12px; border-radius: 50%; background: #808085; border: 1px solid #6c6c70; }
.wtitle { flex: 1; text-align: center; padding-right: 99px; color: #4a4a4a; letter-spacing: -.1px; }

.bar { display: flex; align-items: center; height: 39px; background: linear-gradient(#f5f5f5, #ebebeb); border-bottom: 1px solid #b2b2b2; }
.bar.last { height: 38px; }
.i { width: 33px; height: 32px; padding: 4px 4.5px; }
.off { opacity: .38; }
.i.on { background: #d9d9d9; border: 1px solid #a0a0a0; border-radius: 2px; padding: 3px 3.500px; }
.i.framed { background: #fdfdfd; border: 1px solid #a0a0a0; border-radius: 2px; padding: 3px 3.500px; }
.grip { flex: none; width: 16px; height: 26px; background: radial-gradient(circle at 1px 1px, #bdbdbd .8px, transparent 1px) 6px 1px / 3px 3px content-box; padding: 0 4px 0 6px; }
.grip.first { width: 12.500px; padding: 0 1.500px 0 5px; }
.grip.tight { width: 14px; padding: 0 2px 0 6px; }
.bar u, .side u, .ptools u { flex: none; width: 12px; height: 6px; background: linear-gradient(#555, #555) center / 8px 6px no-repeat; clip-path: polygon(2px 0, 10px 0, 6px 5px); }
.bar s { flex: none; width: 1px; height: 24px; margin: 0 3px; background: #d0d0d0; }
.fill { flex: 1; }
.more { width: 17px; font-size: 15px; text-align: center; }
.drop { position: relative; display: block; flex: none; }
.drop::after { content: ""; position: absolute; right: 3px; bottom: 2px; border: 3px solid transparent; border-top: 4px solid #444; border-bottom: 0; }
.drop.sm::after { right: 2px; bottom: 0; }

.field { position: relative; display: flex; align-items: center; flex: none; height: 24px; background: #fff; border: 1px solid #b0b0b0; border-radius: 2px; padding: 0 4px; color: #111; }
.field em { margin-left: auto; width: 13px; height: 100%; position: relative; }
.spin { padding-right: 0; }
.spin em { border-left: 1px solid #c4c4c4; background: #f6f6f6; }
.spin em::before, .spin em::after, .combo em::after { content: ""; position: absolute; left: 3px; border: 3.500px solid transparent; }
.spin em::before { top: 4px; border-bottom: 5px solid #555; border-top: 0; }
.spin em::after { bottom: 4px; border-top: 5px solid #777; border-bottom: 0; }
.combo { background: linear-gradient(#fdfdfd, #f0f0f0); }
.combo em::after { top: 50%; margin-top: -3px; border-top: 6px solid #555; border-bottom: 0; }
.tol { width: 97px; margin: 0 1.500px 0 1.500px; }
.unit { width: 98px; background: #fff; }
.country { width: 93px; margin: 0 2px 0 1px; letter-spacing: -.35px; }
.osm { width: 124px; color: #777; padding-left: 2px; }

.work { display: flex; height: 850px; background: #ebebeb; }
.side { width: 53px; display: flex; flex-direction: column; background: linear-gradient(90deg, #f6f6f6, #e4e4e4); border-right: 2px solid #b2b2b2; }
.hgrip { width: 17px; height: 6px; margin: 5px 0 1px 18px; background: radial-gradient(circle at 1px 1px, #b5b5b5 .8px, transparent 1px) 0 0 / 3px 3px; flex: none; }
.hgrip.mid { margin: 9px 0 1px 18px; }
.side div { height: 32.100px; display: flex; align-items: center; padding-left: 8px; }
.side .c { padding-left: 14px; }
.v { width: 24px; height: 24px; }
.side u { margin-left: 4px; }

.panel { display: flex; flex-direction: column; flex: none; }
.layers { width: 384px; }
.ptitle { display: flex; align-items: center; height: 22px; padding: 0 2px 0 3px; font-size: 12px; letter-spacing: 0; color: #333; }
.ptitle span { flex: 1; }
.ptitle svg { width: 11px; height: 11px; margin-left: 3px; }
.ptools { display: flex; align-items: center; height: 29px; padding: 0 2px 3px; }
.tools .ptools { padding-left: 4px; }
.p { width: 25px; height: 16px; padding: 0 4px; }
.ptools s { width: 1px; height: 12px; margin: 0 3px; background: #ccc; }
.tree { flex: 1; background: #fff; border: 1px solid #b2b2b2; font-variant-numeric: tabular-nums; }
.row { display: flex; align-items: center; height: 18px; }
.row i { flex: none; width: 8px; height: 5px; margin: 0 8px 0 5px; }
.row i.dn { background: #555; clip-path: polygon(0 0, 100% 0, 50% 100%); }
.row i.rt { width: 5px; height: 8px; margin: 0 10px 0 6px; background: #555; clip-path: polygon(0 0, 100% 50%, 0 100%); }
.cb { flex: none; width: 14px; height: 14px; margin-left: 1px; background: #fff; border: 1px solid #b5b5b5; }
.cb svg { width: 12px; height: 12px; }
.rl { width: 13px; height: 13px; margin: 0 7px 0 8px; }
.layers .gi { width: 15px; height: 15px; margin: 0 6px 0 7px; }
.g { font-weight: 700; font-style: italic; color: #808080; letter-spacing: -.1px; }
.row strong { letter-spacing: -.15px; }
.sub { padding-left: 20px; }
.leg { padding-left: 42px; letter-spacing: -.45px; }
.sw { flex: none; width: 16px; height: 16px; margin-right: 6px; }
.cb + .sw { margin-left: 6px; }
.k0 { background: #000; } .k1 { background: #51127c; } .k2 { background: #b73779; } .k3 { background: #fc8961; } .k4 { background: #fcfdbf; }
.dash { border: 1px dashed #f4f0c0; }
.sel { background: #dcdcdc; }

.split { width: 6px; flex: none; display: flex; align-items: center; justify-content: center; }
.split::before { content: ""; width: 3px; height: 18px; background: radial-gradient(circle at 1px 1px, #b0b0b0 .8px, transparent 1px) 0 0 / 3px 3px; }
.canvas { width: 982px; height: 849px; margin-top: 1px; background: #fff; border: 1px solid #b2b2b2; overflow: hidden; }
.map { width: 981px; height: 847px; shape-rendering: crispEdges; }

.tools { flex: 1; }
.find { height: 24px; padding: 0 8px; }
.mg { width: 13px; height: 13px; margin-right: 7px; }
.cl { width: 13px; height: 10px; margin-left: auto; }
.alg { padding-top: 1px; letter-spacing: -.25px; color: #000; }
.alg .gi { width: 15px; height: 15px; margin-right: 6px; }
.alg .row i { margin: 0 10px 0 6px; }
.alg .ch { padding-left: 44px; }
.alg .cat { height: 16px; padding-left: 20px; }
.alg .cat i { margin-right: 9px; }
.alg .leaf { padding-left: 64px; }
.tabs { display: flex; align-items: flex-start; height: 29px; padding-top: 1px; border-top: 1px solid #b2b2b2; letter-spacing: -.2px; }
.tabs span { height: 24px; line-height: 24px; text-align: center; background: #dadada; border: 1px solid #b2b2b2; border-left: 0; color: #333; }
.tabs .cur { height: 26px; line-height: 26px; background: #f4f4f4; border-top: 0; }
.t1 { width: 86px; } .t2 { width: 139px; } .t3 { width: 104px; } .t4 { width: 110px; }

.status { display: flex; align-items: center; height: 30px; padding: 0 2px 0 4px; background: #ebebeb; border-radius: 0 0 5px 5px; font-size: 12px; letter-spacing: -.25px; }
.status .field { height: 22px; }
.status .loc { width: 212px; height: 23px; padding: 0 8px; font-size: 13px; }
.coord { width: 106px; justify-content: center; }
.ex { width: 24px; height: 16px; }
.s1 { width: 61px; } .s2 { width: 32px; margin-left: 10px; } .s3 { width: 52px; } .s4 { width: 54px; margin-left: 9px; } .s5 { width: 53px; margin-left: 5px; } .s6 { width: 86px; margin-left: 2px; }
.scale { width: 94px; background: #fff; padding-right: 0; }
.scale em { width: 20px; border-left: 1px solid #c4c4c4; background: #f6f6f6; }
.scale em::after { left: 6px; }
.lk { width: 34px; height: 16px; }
.magn { width: 88px; } .rot { width: 89px; }
.status .cb { margin-left: 7px; }
.cr { width: 16px; height: 14px; } .ms { width: 24px; height: 16px; }

.popup { position: absolute; left: 4px; top: 709px; width: 961px; height: 322px; display: flex; background: #fff; border: 1px solid #b2b2b2; letter-spacing: -.16px; color: #000; }
.popup ul { flex: 1; margin: 0; padding: 0; list-style: none; }
.popup li { display: flex; align-items: center; height: 16px; padding-left: 4px; }
.popup li svg { width: 16px; height: 16px; margin-right: 6px; }
.popup li .pm { width: 13px; height: 13px; margin: 0 8px 0 1px; }
.popup .head { color: #c2c2c2; }
.popup .cur { background: #4e9f36; color: #fff; }
.popup .cur svg { margin-right: 3px; }
.popup .cur span { width: 458px; height: 16px; padding-left: 2px; border: 1px solid #47912f; line-height: 14px; }
.scroll { width: 14px; display: flex; flex-direction: column; background: #e2e2e2; border-left: 1px solid #b2b2b2; }
.scroll i { height: 14px; background: #f8f8f8; display: flex; justify-content: center; align-items: center; border-bottom: 1px solid #b2b2b2; }
.scroll i::before { content: ""; border: 4px solid transparent; border-bottom: 5px solid #555; border-top: 0; }
.scroll .down { border: 0; border-top: 1px solid #b2b2b2; margin-top: auto; }
.scroll .down::before { border-bottom: 0; border-top: 5px solid #555; }
.scroll b { height: 144px; margin-top: 135px; background: linear-gradient(90deg, #fff, #f0f0f0); border: solid #b2b2b2; border-width: 1px 0; }
```
